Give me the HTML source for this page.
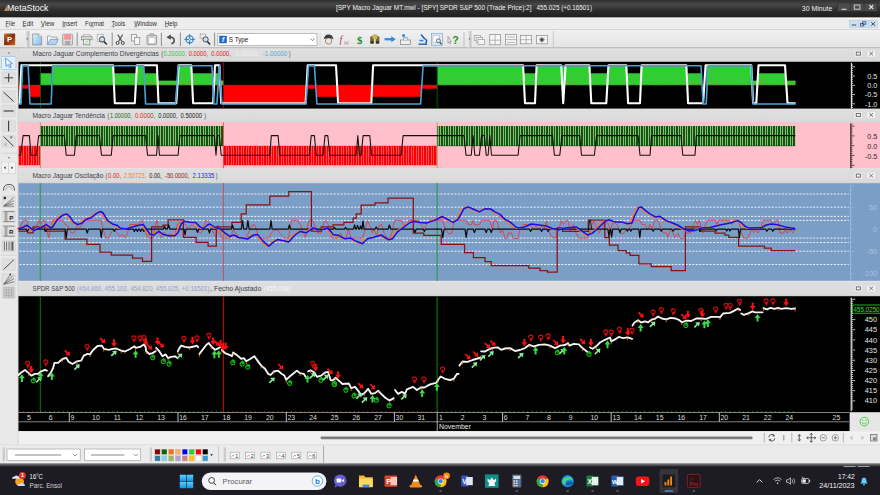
<!DOCTYPE html>
<html lang="pt"><head><meta charset="utf-8"><title>MetaStock</title>
<style>html,body{margin:0;padding:0;background:#ececec;overflow:hidden}svg{display:block}svg{font-family:"Liberation Sans",sans-serif}text{white-space:pre}</style></head>
<body>
<svg width="880" height="495" viewBox="0 0 880 495" font-family='"Liberation Sans", sans-serif'>
<defs>
<linearGradient id="gTitle" x1="0" y1="0" x2="0" y2="1">
<stop offset="0" stop-color="#303030"/><stop offset="0.25" stop-color="#474747"/><stop offset="0.6" stop-color="#2c2c2c"/><stop offset="1" stop-color="#1d1d1d"/></linearGradient>
<linearGradient id="gPanel" x1="0" y1="0" x2="0" y2="1">
<stop offset="0" stop-color="#dfdfdf"/><stop offset="1" stop-color="#dadada"/></linearGradient>
<linearGradient id="gTool" x1="0" y1="0" x2="0" y2="1">
<stop offset="0" stop-color="#f1f1f1"/><stop offset="1" stop-color="#e4e4e4"/></linearGradient>
<linearGradient id="gGrip" x1="0" y1="0" x2="1" y2="0">
<stop offset="0" stop-color="#f0f0f0"/><stop offset="1" stop-color="#b8b8b8"/></linearGradient>
<linearGradient id="gWin" x1="0" y1="0" x2="0" y2="1">
<stop offset="0" stop-color="#5ed0ff"/><stop offset="1" stop-color="#1292e8"/></linearGradient>
<linearGradient id="gP" x1="0" y1="0" x2="1" y2="1">
<stop offset="0" stop-color="#c8742a"/><stop offset="0.5" stop-color="#7a2e12"/><stop offset="1" stop-color="#d8661c"/></linearGradient>
<linearGradient id="gDoc" x1="0" y1="0" x2="1" y2="1">
<stop offset="0" stop-color="#dff0fb"/><stop offset="1" stop-color="#7fbfe6"/></linearGradient>
<linearGradient id="gSep" x1="0" y1="0" x2="0" y2="1">
<stop offset="0" stop-color="#8e8e8e"/><stop offset="0.5" stop-color="#4e4e52"/><stop offset="1" stop-color="#1e1c24"/></linearGradient>
<pattern id="gbars" x="40.4" y="0" width="1.668" height="10" patternUnits="userSpaceOnUse">
<rect x="0" y="0" width="1.668" height="10" fill="#8bb279"/><rect x="0" y="0" width="0.95" height="10" fill="#075b07"/></pattern>
<pattern id="rbars" x="18.5" y="0" width="1.668" height="10" patternUnits="userSpaceOnUse">
<rect x="0" y="0" width="1.668" height="10" fill="#ff7480"/><rect x="0" y="0" width="1.15" height="10" fill="#ff0808"/></pattern>
</defs>
<rect x="0.00" y="0.00" width="880.00" height="495.00" fill="#ececec" />
<rect x="0.00" y="0.00" width="880.00" height="17.80" fill="url(#gTitle)" />
<path d="M4.2 10.9 L7.2 5.2 L7.2 10.9 Z" fill="#f08a1c" stroke="none" stroke-width="1" />
<text x="7.00" y="10.90" font-size="8.6" fill="#ffffff" text-anchor="start" textLength="41.50" lengthAdjust="spacingAndGlyphs" >MetaStock</text>
<text x="336.00" y="10.30" font-size="6.9" fill="#f2f2f2" text-anchor="start" textLength="195.50" lengthAdjust="spacingAndGlyphs" >[SPY Macro Jaguar MT.mwl - [SPY] SPDR S&amp;P 500 (Trade Price):2]</text>
<text x="536.50" y="10.30" font-size="6.9" fill="#f2f2f2" text-anchor="start" textLength="55.50" lengthAdjust="spacingAndGlyphs" >455.025 (+0.16501)</text>
<text x="801.80" y="10.50" font-size="7.2" fill="#f0f0f0" text-anchor="start" textLength="30.60" lengthAdjust="spacingAndGlyphs" >30 Minute</text>
<rect x="837.50" y="2.80" width="40.00" height="8.80" fill="#4b4b4b" rx="1" stroke="#222" stroke-width="0.5"/>
<line x1="850.30" y1="2.80" x2="850.30" y2="11.60" stroke="#2a2a2a" stroke-width="0.6" />
<line x1="864.00" y1="2.80" x2="864.00" y2="11.60" stroke="#2a2a2a" stroke-width="0.6" />
<line x1="841.50" y1="9.30" x2="846.50" y2="9.30" stroke="#d8d8d8" stroke-width="1.1" />
<rect x="854.30" y="5.00" width="5.60" height="4.20" fill="none" stroke="#d8d8d8" stroke-width="0.9"/>
<path d="M869.3 5.0 L873.3 9.0 M873.3 5.0 L869.3 9.0" fill="none" stroke="#e0e0e0" stroke-width="1.1" />
<rect x="0.00" y="17.50" width="880.00" height="12.20" fill="#ededed" />
<line x1="0.00" y1="18.20" x2="880.00" y2="18.20" stroke="#fafafa" stroke-width="0.6" />
<line x1="0.00" y1="29.60" x2="880.00" y2="29.60" stroke="#c6c6c6" stroke-width="0.7" />
<text x="5.50" y="25.60" font-size="6.9" fill="#2e2e2e" text-anchor="start" textLength="9.50" lengthAdjust="spacingAndGlyphs" >File</text>
<line x1="5.50" y1="26.70" x2="8.70" y2="26.70" stroke="#2e2e2e" stroke-width="0.5" />
<text x="22.60" y="25.60" font-size="6.9" fill="#2e2e2e" text-anchor="start" textLength="10.60" lengthAdjust="spacingAndGlyphs" >Edit</text>
<line x1="22.60" y1="26.70" x2="25.80" y2="26.70" stroke="#2e2e2e" stroke-width="0.5" />
<text x="40.80" y="25.60" font-size="6.9" fill="#2e2e2e" text-anchor="start" textLength="13.60" lengthAdjust="spacingAndGlyphs" >View</text>
<line x1="40.80" y1="26.70" x2="44.00" y2="26.70" stroke="#2e2e2e" stroke-width="0.5" />
<text x="62.20" y="25.60" font-size="6.9" fill="#2e2e2e" text-anchor="start" textLength="15.00" lengthAdjust="spacingAndGlyphs" >Insert</text>
<line x1="62.20" y1="26.70" x2="65.40" y2="26.70" stroke="#2e2e2e" stroke-width="0.5" />
<text x="85.00" y="25.60" font-size="6.9" fill="#2e2e2e" text-anchor="start" textLength="19.00" lengthAdjust="spacingAndGlyphs" >Format</text>
<line x1="90.60" y1="26.70" x2="93.80" y2="26.70" stroke="#2e2e2e" stroke-width="0.5" />
<text x="111.50" y="25.60" font-size="6.9" fill="#2e2e2e" text-anchor="start" textLength="13.70" lengthAdjust="spacingAndGlyphs" >Tools</text>
<line x1="111.50" y1="26.70" x2="114.70" y2="26.70" stroke="#2e2e2e" stroke-width="0.5" />
<text x="134.20" y="25.60" font-size="6.9" fill="#2e2e2e" text-anchor="start" textLength="22.80" lengthAdjust="spacingAndGlyphs" >Window</text>
<line x1="134.20" y1="26.70" x2="137.40" y2="26.70" stroke="#2e2e2e" stroke-width="0.5" />
<text x="164.70" y="25.60" font-size="6.9" fill="#2e2e2e" text-anchor="start" textLength="12.80" lengthAdjust="spacingAndGlyphs" >Help</text>
<line x1="164.70" y1="26.70" x2="167.90" y2="26.70" stroke="#2e2e2e" stroke-width="0.5" />
<rect x="849.30" y="20.30" width="28.40" height="7.00" fill="#cfe1f0" stroke="#a9c3da" stroke-width="0.5"/>
<line x1="858.60" y1="20.30" x2="858.60" y2="27.30" stroke="#a9c3da" stroke-width="0.5" />
<line x1="868.30" y1="20.30" x2="868.30" y2="27.30" stroke="#a9c3da" stroke-width="0.5" />
<line x1="851.60" y1="25.00" x2="856.20" y2="25.00" stroke="#31506f" stroke-width="1.0" />
<rect x="860.60" y="23.60" width="3.20" height="2.40" fill="none" stroke="#31506f" stroke-width="0.8"/>
<rect x="862.60" y="21.80" width="3.20" height="2.40" fill="none" stroke="#31506f" stroke-width="0.8"/>
<path d="M871.2 22.1 L875.0 25.7 M875.0 22.1 L871.2 25.7" fill="none" stroke="#31506f" stroke-width="1.0" />
<rect x="0.00" y="29.90" width="880.00" height="18.00" fill="url(#gTool)" />
<line x1="0.00" y1="48.10" x2="880.00" y2="48.10" stroke="#9c9c9c" stroke-width="1.2" />
<rect x="4.00" y="33.60" width="11.20" height="11.60" fill="url(#gP)" rx="0.8"/>
<text x="9.60" y="42.20" font-size="7.6" fill="#fff" text-anchor="middle" font-weight="bold">P</text>
<rect x="25.00" y="31.00" width="4.40" height="16.40" fill="url(#gGrip)" />
<path d="M26.3 38.6 h1.8 l-0.9 1.2 z" fill="#333" stroke="none" stroke-width="1" />
<path d="M32.6 34.0 h6.2 l2.8 2.8 v8.2 h-9 z" fill="url(#gDoc)" stroke="#7d8790" stroke-width="0.7" />
<path d="M38.8 34.0 v2.8 h2.8" fill="#fff" stroke="#7d8790" stroke-width="0.6" />
<path d="M47.5 44.6 v-8.6 h3.2 l1 1.2 h5.2 v2.2" fill="#f3f6f9" stroke="#7f8d9a" stroke-width="0.7" />
<path d="M47.5 44.6 l2.6 -5.2 h8.2 l-2.6 5.2 z" fill="#b5d3ee" stroke="#6f8fb0" stroke-width="0.7" />
<rect x="62.60" y="34.20" width="10.00" height="10.80" fill="#d9d9d9" rx="1" stroke="#8d8d8d" stroke-width="0.7"/>
<rect x="64.20" y="34.60" width="6.80" height="5.00" fill="#ff8c96" />
<rect x="65.00" y="41.00" width="5.20" height="3.80" fill="#a8a8a8" />
<line x1="77.20" y1="32.60" x2="77.20" y2="46.00" stroke="#858585" stroke-width="0.9" />
<path d="M83.2 36.8 v-2 h7 v2" fill="#fff" stroke="#808080" stroke-width="0.6" />
<rect x="81.40" y="36.80" width="10.60" height="3.00" fill="#e4e4e4" stroke="#7c7c7c" stroke-width="0.7"/>
<rect x="83.60" y="39.20" width="6.20" height="5.60" fill="#e7f0e4" stroke="#7c7c7c" stroke-width="0.7"/>
<path d="M85 43.6 l3.4 -3.2" fill="none" stroke="#8fc58a" stroke-width="0.8" />
<rect x="97.20" y="34.20" width="6.00" height="7.20" fill="#f4f4f4" stroke="#9a9a9a" stroke-width="0.6"/>
<circle cx="102.0" cy="39.4" r="2.7" fill="#bfe0f4" stroke="#3a3a3a" stroke-width="0.9"/>
<line x1="103.90" y1="41.40" x2="106.80" y2="44.60" stroke="#2a2a2a" stroke-width="1.5" />
<line x1="112.20" y1="32.60" x2="112.20" y2="46.00" stroke="#858585" stroke-width="0.9" />
<path d="M117.8 34.6 l4.0 6.8 M122.6 34.6 l-4.0 6.8" fill="none" stroke="#5a5a5a" stroke-width="1.2" />
<circle cx="117.6" cy="43.0" r="1.5" fill="none" stroke="#3a3a3a" stroke-width="0.9"/>
<circle cx="122.8" cy="43.0" r="1.5" fill="none" stroke="#3a3a3a" stroke-width="0.9"/>
<rect x="131.60" y="34.40" width="5.00" height="6.60" fill="#f6f6f6" stroke="#777" stroke-width="0.6"/>
<rect x="134.40" y="37.60" width="5.40" height="6.80" fill="#f6f6f6" stroke="#777" stroke-width="0.6"/>
<rect x="147.00" y="35.20" width="9.60" height="9.40" fill="#dedede" rx="0.8" stroke="#7b7b7b" stroke-width="0.7"/>
<rect x="148.80" y="37.20" width="6.20" height="6.60" fill="#fbfbfb" stroke="#9a9a9a" stroke-width="0.4"/>
<rect x="150.00" y="33.80" width="3.60" height="2.20" fill="#c8c8c8" stroke="#7b7b7b" stroke-width="0.5"/>
<line x1="161.40" y1="32.60" x2="161.40" y2="46.00" stroke="#858585" stroke-width="0.9" />
<path d="M171.4 43.8 q3.6 -1.2 2.6 -4.6 q-1 -2.4 -4.6 -2.2" fill="none" stroke="#4d4d4d" stroke-width="1.6" />
<path d="M166.4 37.2 l4.4 -2.8 v5.4 z" fill="#4d4d4d" stroke="none" stroke-width="1" />
<line x1="180.40" y1="32.60" x2="180.40" y2="46.00" stroke="#858585" stroke-width="0.9" />
<circle cx="189.6" cy="39.4" r="3.6" fill="none" stroke="#1b74c4" stroke-width="1.1"/>
<path d="M184.4 39.4 h10.4 M189.6 34.2 v10.4" fill="none" stroke="#1b74c4" stroke-width="0.9" />
<circle cx="189.6" cy="39.4" r="1.0" fill="#fff" stroke="#1b74c4" stroke-width="0.5"/>
<rect x="200.20" y="34.00" width="5.40" height="4.40" fill="none" stroke="#555" stroke-width="0.6" stroke-dasharray="1 0.7"/>
<circle cx="205.6" cy="39.4" r="2.6" fill="#c5e3f5" stroke="#3a3a3a" stroke-width="0.9"/>
<line x1="207.40" y1="41.40" x2="210.00" y2="44.40" stroke="#2a2a2a" stroke-width="1.5" />
<line x1="214.60" y1="32.60" x2="214.60" y2="46.00" stroke="#858585" stroke-width="0.9" />
<rect x="217.80" y="33.40" width="99.20" height="12.20" fill="#ffffff" stroke="#a4a4a4" stroke-width="0.7"/>
<rect x="219.60" y="36.00" width="7.00" height="7.00" fill="#1e6fd0" stroke="#0d4a98" stroke-width="0.4"/>
<text x="223.10" y="41.90" font-size="6.4" fill="#fff" text-anchor="middle" font-style="italic" font-weight="bold">f</text>
<text x="228.80" y="42.00" font-size="7.0" fill="#222" text-anchor="start" textLength="19.60" lengthAdjust="spacingAndGlyphs" >S Type</text>
<path d="M310.2 38.4 l2.2 2.2 l2.2 -2.2" fill="none" stroke="#555" stroke-width="0.7" />
<line x1="320.20" y1="32.60" x2="320.20" y2="46.00" stroke="#cfcfcf" stroke-width="0.6" />
<circle cx="328.6" cy="41.0" r="3.2" fill="#f5e3cf" stroke="#555" stroke-width="0.6"/>
<path d="M323.8 39.2 q4.8 -2.2 9.6 0 q-0.6 -4.8 -4.8 -4.8 q-4.2 0 -4.8 4.8 z" fill="#3c3c3c" stroke="none" stroke-width="1" />
<text x="339.60" y="43.20" font-size="10.2" fill="#c2347a" text-anchor="start" font-style="italic" style="font-family:&quot;Liberation Serif&quot;,serif">f</text>
<text x="344.20" y="43.60" font-size="3.6" fill="#c2347a" text-anchor="start" >(x)</text>
<text x="359.60" y="43.80" font-size="10.8" fill="#128a2e" text-anchor="middle" font-weight="bold" style="font-family:&quot;Liberation Serif&quot;,serif">$</text>
<rect x="370.20" y="36.20" width="3.80" height="7.60" fill="#7b6a2a" rx="1"/>
<rect x="375.60" y="36.20" width="3.80" height="7.60" fill="#7b6a2a" rx="1"/>
<rect x="372.60" y="34.40" width="4.60" height="4.60" fill="#c9b458" />
<rect x="370.60" y="41.20" width="3.00" height="2.20" fill="#2d2d2d" />
<rect x="376.00" y="41.20" width="3.00" height="2.20" fill="#2d2d2d" />
<path d="M384.6 38.0 h6.6 v-1.8 l4.6 3.0 l-4.6 3.0 v-1.8 h-6.6 z" fill="#2b8ae6" stroke="none" stroke-width="1" />
<path d="M384.6 38.0 h6.6 M384.6 40.4 h6.6" fill="none" stroke="#e6f3ff" stroke-width="0.5" stroke-dasharray="0.8 0.8"/>
<rect x="400.60" y="40.00" width="9.80" height="4.40" fill="#efefef" stroke="#808080" stroke-width="0.7"/>
<path d="M403.6 40.0 v-2.4 h4 v2.4" fill="#dbe8f4" stroke="#6d8cab" stroke-width="0.6" />
<circle cx="403.6" cy="35.6" r="1.5" fill="#2b8ae6"/>
<path d="M418.6 44.2 h8.6" fill="none" stroke="#1d5fb4" stroke-width="1.4" />
<path d="M421.0 34.6 l3.6 4.2 M424.6 38.6 q3.4 1.6 1.0 5.0" fill="none" stroke="#1d5fb4" stroke-width="1.5" />
<rect x="419.40" y="39.80" width="4.00" height="1.60" fill="#2b8ae6" />
<rect x="431.40" y="33.60" width="11.00" height="11.60" fill="#dbe9f6" stroke="#6f9ccc" stroke-width="0.6"/>
<rect x="433.00" y="35.20" width="6.20" height="7.00" fill="#fbfbfb" stroke="#9a9a9a" stroke-width="0.4"/>
<circle cx="438.4" cy="40.8" r="2.0" fill="#d4ecfb" stroke="#444" stroke-width="0.7"/>
<line x1="439.80" y1="42.40" x2="441.60" y2="44.40" stroke="#333" stroke-width="1.1" />
<path d="M448.0 36.4 l3.2 5.0 l-1.4 0.2 l0.8 1.8 l-0.9 0.3 l-0.8 -1.8 l-0.9 0.9 z" fill="#f2f2f2" stroke="#666" stroke-width="0.5" />
<text x="455.40" y="43.80" font-size="10.6" fill="#2f8f20" text-anchor="middle" font-weight="bold">?</text>
<line x1="464.00" y1="32.00" x2="464.00" y2="46.60" stroke="#a5a5a5" stroke-width="0.6" />
<rect x="467.60" y="31.00" width="3.80" height="16.40" fill="url(#gGrip)" />
<path d="M468.6 38.6 h1.6 l-0.8 1.1 z" fill="#333" stroke="none" stroke-width="1" />
<rect x="474.20" y="35.40" width="6.20" height="5.00" fill="#f6f6f6" stroke="#8c8c8c" stroke-width="0.6"/>
<rect x="476.20" y="37.40" width="6.20" height="5.00" fill="#f6f6f6" stroke="#8c8c8c" stroke-width="0.6"/>
<rect x="478.00" y="39.40" width="6.40" height="5.20" fill="#f6f6f6" stroke="#8c8c8c" stroke-width="0.6"/>
<rect x="489.80" y="34.40" width="10.60" height="10.40" fill="#f6f6f6" stroke="#8c8c8c" stroke-width="0.7"/>
<path d="M495.1 34.4 v10.4 M489.8 40.2 h10.6" fill="none" stroke="#8c8c8c" stroke-width="0.6" />
<rect x="505.60" y="34.40" width="10.80" height="10.40" fill="#f6f6f6" stroke="#8c8c8c" stroke-width="0.7"/>
<path d="M505.6 39.6 h10.8 M507 37 h8 M507 42.4 h8" fill="none" stroke="#8c8c8c" stroke-width="0.6" />
<rect x="520.60" y="35.60" width="11.00" height="8.20" fill="#f6f6f6" stroke="#8c8c8c" stroke-width="0.7"/>
<path d="M526.1 35.6 v8.2 M520.6 39.7 h11" fill="none" stroke="#8c8c8c" stroke-width="0.6" />
<rect x="536.40" y="35.60" width="11.00" height="8.20" fill="#f6f6f6" stroke="#8c8c8c" stroke-width="0.7"/>
<circle cx="541.9" cy="39.7" r="1.7" fill="#333"/>
<path d="M538.6 39.7 h6.6 M541.9 36.6 v6.2 M539.6 37.4 l4.6 4.6 M544.2 37.4 l-4.6 4.6" fill="none" stroke="#555" stroke-width="0.5" />
<line x1="553.40" y1="31.00" x2="553.40" y2="47.20" stroke="#b3b3b3" stroke-width="0.6" />
<rect x="0.00" y="48.50" width="18.00" height="396.00" fill="#e9e9e9" />
<line x1="18.20" y1="48.50" x2="18.20" y2="444.50" stroke="#b5b5b5" stroke-width="0.6" />
<rect x="0.00" y="48.60" width="18.00" height="9.00" fill="#dcdcdc" />
<circle cx="9" cy="52.9" r="0.7" fill="#444"/>
<circle cx="9" cy="157.7" r="0.7" fill="#444"/>
<rect x="1.00" y="152.80" width="16.00" height="0.60" fill="#c4c4c4" />
<rect x="1.00" y="87.00" width="16.00" height="0.60" fill="#c8c8c8" />
<rect x="1.40" y="56.40" width="14.60" height="13.20" fill="#e3f0fb" stroke="#8fc1ea" stroke-width="0.7" rx="0.8"/>
<path d="M5.6 58.2 l0.4 8.2 l2.2 -1.8 l1.6 3.2 l1.4 -0.7 l-1.6 -3.1 l2.8 -0.4 z" fill="#fff" stroke="#2f7fd6" stroke-width="0.8" />
<rect x="2.00" y="72.00" width="13.40" height="11.60" fill="#e0e0e0" stroke="#cfcfcf" stroke-width="0.5" rx="0.6"/>
<path d="M4.4 77.8 h8.6 M8.7 73.4 v8.8" fill="none" stroke="#3a3a3a" stroke-width="1.0" />
<rect x="2.00" y="90.80" width="13.40" height="11.60" fill="#e0e0e0" stroke="#cfcfcf" stroke-width="0.5" rx="0.6"/>
<path d="M3.6 92.2 l10 9.2" fill="none" stroke="#3a3a3a" stroke-width="1.0" />
<rect x="2.00" y="105.20" width="13.40" height="11.60" fill="#e0e0e0" stroke="#cfcfcf" stroke-width="0.5" rx="0.6"/>
<path d="M3.6 111.0 h10" fill="none" stroke="#3a3a3a" stroke-width="1.1" />
<rect x="2.00" y="120.20" width="13.40" height="11.60" fill="#e0e0e0" stroke="#cfcfcf" stroke-width="0.5" rx="0.6"/>
<path d="M8.6 120.8 v10.4" fill="none" stroke="#3a3a3a" stroke-width="1.1" />
<rect x="2.00" y="135.60" width="13.40" height="11.60" fill="#e0e0e0" stroke="#cfcfcf" stroke-width="0.5" rx="0.6"/>
<path d="M3.8 136.6 l9.6 9.6" fill="none" stroke="#3a3a3a" stroke-width="1.0" />
<path d="M9.6 137.2 h3.2 M11.2 135.8 v3.0 M4.2 143.6 l2.2 2.2 M5.4 142.4 l1.2 1.2" fill="none" stroke="#555" stroke-width="0.6" />
<rect x="1.40" y="162.00" width="6.80" height="11.60" fill="#f3f3f3" stroke="#c9c9c9" stroke-width="0.5"/>
<rect x="8.80" y="162.00" width="6.80" height="11.60" fill="#f3f3f3" stroke="#c9c9c9" stroke-width="0.5"/>
<path d="M5.6 166.2 v3.0 l-1.8 -1.5 z M11.4 166.2 v3.0 l1.8 -1.5 z" fill="#333" stroke="none" stroke-width="1" />
<path d="M3.4 190.6 q0 -6.2 5.6 -6.2 q5.6 0 5.6 6.2" fill="none" stroke="#4a4a4a" stroke-width="0.9" />
<path d="M5.6 190.6 q0 -4.0 3.4 -4.0 q3.4 0 3.4 4.0" fill="none" stroke="#8a8a8a" stroke-width="0.6" />
<rect x="2.00" y="195.80" width="13.40" height="11.60" fill="#e0e0e0" stroke="#cfcfcf" stroke-width="0.5" rx="0.6"/>
<path d="M3.8 206.0 l10 -8.6 M3.8 206.0 l10 -5.4 M3.8 206.0 l10 -2.4 M3.8 206.0 l10 0.2" fill="none" stroke="#444" stroke-width="0.6" />
<rect x="3.60" y="196.80" width="2.40" height="2.40" fill="#333" />
<rect x="2.00" y="210.80" width="13.40" height="11.60" fill="#e0e0e0" stroke="#cfcfcf" stroke-width="0.5" rx="0.6"/>
<path d="M3.4 211.6 h11 M3.4 221.6 h11 M5.2 212 v9.4 M6.8 212 v9.4" fill="none" stroke="#555" stroke-width="0.6" />
<text x="11.20" y="219.60" font-size="6.2" fill="#222" text-anchor="middle" font-weight="bold">P</text>
<rect x="2.00" y="225.40" width="13.40" height="11.60" fill="#e0e0e0" stroke="#cfcfcf" stroke-width="0.5" rx="0.6"/>
<path d="M3.4 226.2 h11 M3.4 236.2 h11 M5.2 226.6 v9.4 M6.8 226.6 v9.4" fill="none" stroke="#555" stroke-width="0.6" />
<text x="11.20" y="234.20" font-size="6.2" fill="#222" text-anchor="middle" font-weight="bold">R</text>
<rect x="2.00" y="240.20" width="13.40" height="11.60" fill="#e0e0e0" stroke="#cfcfcf" stroke-width="0.5" rx="0.6"/>
<path d="M4.4 241.6 v9 M6.6 241.6 v9 M9.0 241.6 v9 M11.2 241.6 v9" fill="none" stroke="#555" stroke-width="0.8" />
<path d="M12.8 241.6 v9" fill="none" stroke="#222" stroke-width="1.0" />
<rect x="1.00" y="254.80" width="16.00" height="0.50" fill="#c4c4c4" />
<rect x="2.00" y="258.80" width="13.40" height="11.60" fill="#e0e0e0" stroke="#cfcfcf" stroke-width="0.5" rx="0.6"/>
<path d="M3.6 269.4 l10.2 -9.6" fill="none" stroke="#3a3a3a" stroke-width="0.9" />
<rect x="2.00" y="273.80" width="13.40" height="11.60" fill="#e0e0e0" stroke="#cfcfcf" stroke-width="0.5" rx="0.6"/>
<path d="M3.8 284.2 l9.6 -8.8 M3.8 284.2 l10.2 -5.6 M3.8 284.2 l10.4 -2.4 M3.8 284.2 l6.6 -9.6" fill="none" stroke="#444" stroke-width="0.6" />
<path d="M9.0 274.0 l2.2 -0.4 l-0.6 2.2 z" fill="#333" stroke="none" stroke-width="1" />
<rect x="2.00" y="286.80" width="13.40" height="11.60" fill="#e0e0e0" stroke="#cfcfcf" stroke-width="0.5" rx="0.6"/>
<rect x="3.60" y="287.40" width="10.40" height="10.20" fill="#d0d0d0" stroke="#777" stroke-width="0.4" stroke-dasharray="0.8 0.8"/>
<path d="M3.6 290 h10.4 M3.6 292.6 h10.4 M3.6 295.2 h10.4 M6.2 287.4 v10.2 M8.8 287.4 v10.2 M11.4 287.4 v10.2" fill="none" stroke="#8a8a8a" stroke-width="0.4" />
<rect x="18.50" y="48.50" width="861.50" height="13.30" fill="url(#gPanel)" />
<line x1="18.50" y1="48.80" x2="880.00" y2="48.80" stroke="#ebebeb" stroke-width="0.6" />
<line x1="18.50" y1="61.60" x2="880.00" y2="61.60" stroke="#bdbdbd" stroke-width="0.5" />
<text x="32.60" y="56.20" font-size="7.3" fill="#3b3f4c" text-anchor="start" textLength="126.40" lengthAdjust="spacingAndGlyphs" >Macro Jaguar Complemento Divergências</text>
<text x="161.30" y="56.20" font-size="7.3" fill="#3b3f4c" text-anchor="start" textLength="1.90" lengthAdjust="spacingAndGlyphs" >(</text>
<text x="163.40" y="56.20" font-size="7.3" fill="#3ec43e" text-anchor="start" textLength="23.00" lengthAdjust="spacingAndGlyphs" >0.20000,</text>
<text x="188.70" y="56.20" font-size="7.3" fill="#f01818" text-anchor="start" textLength="19.50" lengthAdjust="spacingAndGlyphs" >0.0000,</text>
<text x="211.30" y="56.20" font-size="7.3" fill="#f01818" text-anchor="start" textLength="19.60" lengthAdjust="spacingAndGlyphs" >0.0000,</text>
<text x="233.60" y="56.20" font-size="7.3" fill="#f2f2f2" text-anchor="start" textLength="26.00" lengthAdjust="spacingAndGlyphs" >-1.00000,</text>
<text x="262.70" y="56.20" font-size="7.3" fill="#5aa6d6" text-anchor="start" textLength="24.60" lengthAdjust="spacingAndGlyphs" >-1.00000</text>
<text x="288.80" y="56.20" font-size="7.3" fill="#3b3f4c" text-anchor="start" textLength="1.80" lengthAdjust="spacingAndGlyphs" >)</text>
<rect x="853.80" y="50.30" width="8.80" height="6.80" fill="#f1f1f1" stroke="#cfcfcf" stroke-width="0.5" rx="0.6"/>
<rect x="866.80" y="50.30" width="8.80" height="6.80" fill="#f1f1f1" stroke="#cfcfcf" stroke-width="0.5" rx="0.6"/>
<rect x="856.20" y="52.10" width="4.20" height="3.00" fill="none" stroke="#555" stroke-width="0.8"/>
<path d="M869.4 51.80 l3.6 3.6 M873.0 51.80 l-3.6 3.6" fill="none" stroke="#555" stroke-width="0.8" />
<rect x="18.50" y="108.60" width="861.50" height="14.00" fill="url(#gPanel)" />
<line x1="18.50" y1="108.90" x2="880.00" y2="108.90" stroke="#ebebeb" stroke-width="0.6" />
<line x1="18.50" y1="122.40" x2="880.00" y2="122.40" stroke="#bdbdbd" stroke-width="0.5" />
<text x="32.60" y="117.50" font-size="7.3" fill="#3b3f4c" text-anchor="start" textLength="72.40" lengthAdjust="spacingAndGlyphs" >Macro Jaguar Tendência</text>
<text x="107.60" y="117.50" font-size="7.3" fill="#3b3f4c" text-anchor="start" textLength="1.80" lengthAdjust="spacingAndGlyphs" >(</text>
<text x="110.00" y="117.50" font-size="7.3" fill="#1e6a1e" text-anchor="start" textLength="22.00" lengthAdjust="spacingAndGlyphs" >1.00000,</text>
<text x="135.00" y="117.50" font-size="7.3" fill="#f01818" text-anchor="start" textLength="20.50" lengthAdjust="spacingAndGlyphs" >0.0000,</text>
<text x="158.30" y="117.50" font-size="7.3" fill="#1c1c1c" text-anchor="start" textLength="19.20" lengthAdjust="spacingAndGlyphs" >0.0000,</text>
<text x="180.50" y="117.50" font-size="7.3" fill="#1c1c1c" text-anchor="start" textLength="21.50" lengthAdjust="spacingAndGlyphs" >0.50000</text>
<text x="204.20" y="117.50" font-size="7.3" fill="#3b3f4c" text-anchor="start" textLength="1.80" lengthAdjust="spacingAndGlyphs" >)</text>
<rect x="853.80" y="111.60" width="8.80" height="6.80" fill="#f1f1f1" stroke="#cfcfcf" stroke-width="0.5" rx="0.6"/>
<rect x="866.80" y="111.60" width="8.80" height="6.80" fill="#f1f1f1" stroke="#cfcfcf" stroke-width="0.5" rx="0.6"/>
<rect x="856.20" y="113.40" width="4.20" height="3.00" fill="none" stroke="#555" stroke-width="0.8"/>
<path d="M869.4 113.10 l3.6 3.6 M873.0 113.10 l-3.6 3.6" fill="none" stroke="#555" stroke-width="0.8" />
<rect x="18.50" y="168.20" width="861.50" height="15.00" fill="url(#gPanel)" />
<line x1="18.50" y1="168.50" x2="880.00" y2="168.50" stroke="#ebebeb" stroke-width="0.6" />
<line x1="18.50" y1="183.00" x2="880.00" y2="183.00" stroke="#bdbdbd" stroke-width="0.5" />
<text x="32.60" y="178.20" font-size="7.3" fill="#3b3f4c" text-anchor="start" textLength="70.80" lengthAdjust="spacingAndGlyphs" >Macro Jaguar Oscilação</text>
<text x="105.60" y="178.20" font-size="7.3" fill="#3b3f4c" text-anchor="start" textLength="1.80" lengthAdjust="spacingAndGlyphs" >(</text>
<text x="108.00" y="178.20" font-size="7.3" fill="#f01818" text-anchor="start" textLength="13.30" lengthAdjust="spacingAndGlyphs" >0.00,</text>
<text x="123.80" y="178.20" font-size="7.3" fill="#f08030" text-anchor="start" textLength="22.50" lengthAdjust="spacingAndGlyphs" >2.50723,</text>
<text x="149.30" y="178.20" font-size="7.3" fill="#1c1c1c" text-anchor="start" textLength="12.50" lengthAdjust="spacingAndGlyphs" >0.00,</text>
<text x="165.00" y="178.20" font-size="7.3" fill="#8b1a1a" text-anchor="start" textLength="24.30" lengthAdjust="spacingAndGlyphs" >-50.0000,</text>
<text x="192.50" y="178.20" font-size="7.3" fill="#1c28e8" text-anchor="start" textLength="22.00" lengthAdjust="spacingAndGlyphs" >2.13335</text>
<text x="215.80" y="178.20" font-size="7.3" fill="#3b3f4c" text-anchor="start" textLength="1.80" lengthAdjust="spacingAndGlyphs" >)</text>
<rect x="853.80" y="172.30" width="8.80" height="6.80" fill="#f1f1f1" stroke="#cfcfcf" stroke-width="0.5" rx="0.6"/>
<rect x="866.80" y="172.30" width="8.80" height="6.80" fill="#f1f1f1" stroke="#cfcfcf" stroke-width="0.5" rx="0.6"/>
<rect x="856.20" y="174.10" width="4.20" height="3.00" fill="none" stroke="#555" stroke-width="0.8"/>
<path d="M869.4 173.80 l3.6 3.6 M873.0 173.80 l-3.6 3.6" fill="none" stroke="#555" stroke-width="0.8" />
<rect x="18.50" y="280.80" width="861.50" height="15.40" fill="url(#gPanel)" />
<line x1="18.50" y1="281.10" x2="880.00" y2="281.10" stroke="#ebebeb" stroke-width="0.6" />
<line x1="18.50" y1="296.00" x2="880.00" y2="296.00" stroke="#bdbdbd" stroke-width="0.5" />
<text x="32.60" y="291.00" font-size="7.3" fill="#3b3f4c" text-anchor="start" textLength="42.40" lengthAdjust="spacingAndGlyphs" >SPDR S&amp;P 500</text>
<text x="77.00" y="291.00" font-size="7.3" fill="#8fa6c8" text-anchor="start" textLength="132.60" lengthAdjust="spacingAndGlyphs" >(454.860, 455.100, 454.820, 455.025, +0.16501)</text>
<text x="210.20" y="291.00" font-size="7.3" fill="#3b3f4c" text-anchor="start" textLength="51.00" lengthAdjust="spacingAndGlyphs" >, Fecho Ajustado</text>
<text x="263.80" y="291.00" font-size="7.3" fill="#f7f7f7" text-anchor="start" textLength="26.80" lengthAdjust="spacingAndGlyphs" >(455.008)</text>
<rect x="853.80" y="285.10" width="8.80" height="6.80" fill="#f1f1f1" stroke="#cfcfcf" stroke-width="0.5" rx="0.6"/>
<rect x="866.80" y="285.10" width="8.80" height="6.80" fill="#f1f1f1" stroke="#cfcfcf" stroke-width="0.5" rx="0.6"/>
<rect x="856.20" y="286.90" width="4.20" height="3.00" fill="none" stroke="#555" stroke-width="0.8"/>
<path d="M869.4 286.60 l3.6 3.6 M873.0 286.60 l-3.6 3.6" fill="none" stroke="#555" stroke-width="0.8" />
<rect x="18.50" y="61.80" width="861.50" height="46.80" fill="#000" />
<rect x="18.50" y="85.10" width="1.10" height="3.60" fill="#ff0000" />
<rect x="22.75" y="85.10" width="5.35" height="3.60" fill="#ff0000" />
<rect x="30.00" y="85.10" width="10.40" height="11.70" fill="#ff0000" />
<rect x="40.40" y="73.30" width="11.20" height="11.80" fill="#32cd32" />
<rect x="52.40" y="66.40" width="60.60" height="18.70" fill="#32cd32" />
<rect x="113.00" y="73.30" width="23.90" height="11.80" fill="#32cd32" />
<rect x="136.90" y="66.40" width="7.10" height="18.70" fill="#32cd32" />
<rect x="144.00" y="73.30" width="13.50" height="11.80" fill="#32cd32" />
<rect x="157.50" y="80.60" width="19.70" height="4.50" fill="#32cd32" />
<rect x="178.00" y="66.40" width="13.30" height="18.70" fill="#32cd32" />
<rect x="191.30" y="73.30" width="21.30" height="11.80" fill="#32cd32" />
<rect x="215.00" y="73.30" width="4.60" height="11.80" fill="#32cd32" />
<rect x="220.20" y="80.60" width="3.50" height="4.50" fill="#32cd32" />
<rect x="223.70" y="85.10" width="82.10" height="17.90" fill="#ff0000" />
<rect x="308.00" y="85.10" width="6.80" height="3.60" fill="#ff0000" />
<rect x="316.60" y="85.10" width="20.40" height="11.70" fill="#ff0000" />
<rect x="337.00" y="85.10" width="35.00" height="17.90" fill="#ff0000" />
<rect x="372.00" y="85.10" width="49.00" height="11.70" fill="#ff0000" />
<rect x="422.40" y="85.10" width="15.00" height="3.60" fill="#ff0000" />
<rect x="437.40" y="66.40" width="86.60" height="18.70" fill="#32cd32" />
<rect x="524.00" y="73.30" width="12.00" height="11.80" fill="#32cd32" />
<rect x="536.00" y="66.40" width="54.20" height="18.70" fill="#32cd32" />
<rect x="590.20" y="73.30" width="17.30" height="11.80" fill="#32cd32" />
<rect x="607.50" y="66.40" width="19.70" height="18.70" fill="#32cd32" />
<rect x="627.20" y="73.30" width="13.40" height="11.80" fill="#32cd32" />
<rect x="640.60" y="66.40" width="46.60" height="18.70" fill="#32cd32" />
<rect x="687.20" y="73.30" width="14.40" height="11.80" fill="#32cd32" />
<rect x="706.20" y="66.40" width="45.40" height="18.70" fill="#32cd32" />
<rect x="752.80" y="80.60" width="5.40" height="4.50" fill="#32cd32" />
<rect x="758.20" y="73.30" width="27.40" height="11.80" fill="#32cd32" />
<rect x="786.40" y="80.60" width="9.20" height="4.50" fill="#32cd32" />
<line x1="18.50" y1="85.20" x2="795.30" y2="85.20" stroke="#d81010" stroke-width="0.9" stroke-dasharray="1.1 0.6"/>
<line x1="40.40" y1="61.80" x2="40.40" y2="108.60" stroke="#067006" stroke-width="0.8" />
<line x1="223.40" y1="61.80" x2="223.40" y2="108.60" stroke="#e00000" stroke-width="0.7" />
<line x1="437.20" y1="61.80" x2="437.20" y2="108.60" stroke="#067006" stroke-width="0.8" />
<polyline points="18.60,103.30 19.60,103.30 21.40,65.20 113.10,65.20 114.80,103.30 134.80,103.30 136.90,65.20 156.90,65.20 158.50,103.30 176.30,103.30 178.70,65.20 191.30,65.20 193.10,103.30 213.10,103.30 215.00,65.20 219.40,65.20 221.20,103.30 305.60,103.30 307.70,65.20 336.00,65.20 338.10,103.30 371.30,103.30 373.10,65.20 523.10,65.20 525.00,103.30 535.00,103.30 536.60,65.20 561.20,65.20 563.20,103.30 563.20,103.30 565.60,65.20 589.40,65.20 591.30,103.30 606.30,103.30 608.50,65.20 626.30,65.20 628.10,103.30 640.00,103.30 641.60,65.20 686.30,65.20 688.10,103.30 703.10,103.30 705.60,65.20 751.30,65.20 753.10,103.30 756.30,103.30 758.50,65.20 785.00,65.20 787.50,103.30 795.60,103.30" fill="none" stroke="#ffffff" stroke-width="2.1" stroke-linejoin="round"/>
<polyline points="18.60,104.00 21.00,104.00 22.60,65.80 28.10,65.80 30.00,104.00 51.20,104.00 52.60,65.80 143.80,65.80 145.60,104.00 175.60,104.00 178.10,65.80 211.90,65.80 213.80,104.00 216.90,104.00 219.40,65.80 219.40,65.80 221.90,104.00 306.00,104.00 308.50,65.80 314.40,65.80 316.90,104.00 420.60,104.00 423.10,65.80 701.00,65.80 703.10,104.00 706.20,104.00 708.10,65.80 751.30,65.80 753.10,104.00 795.60,104.00" fill="none" stroke="#4aa2d8" stroke-width="1.6" stroke-linejoin="round"/>
<line x1="851.40" y1="62.80" x2="851.40" y2="108.60" stroke="#e8e8e8" stroke-width="1.1" />
<line x1="851.40" y1="85.30" x2="855.00" y2="85.30" stroke="#e8e8e8" stroke-width="0.8" />
<line x1="851.40" y1="83.45" x2="853.00" y2="83.45" stroke="#e8e8e8" stroke-width="0.8" />
<line x1="851.40" y1="81.60" x2="853.00" y2="81.60" stroke="#e8e8e8" stroke-width="0.8" />
<line x1="851.40" y1="79.75" x2="853.00" y2="79.75" stroke="#e8e8e8" stroke-width="0.8" />
<line x1="851.40" y1="77.90" x2="853.00" y2="77.90" stroke="#e8e8e8" stroke-width="0.8" />
<line x1="851.40" y1="76.05" x2="855.00" y2="76.05" stroke="#e8e8e8" stroke-width="0.8" />
<line x1="851.40" y1="74.20" x2="853.00" y2="74.20" stroke="#e8e8e8" stroke-width="0.8" />
<line x1="851.40" y1="72.35" x2="853.00" y2="72.35" stroke="#e8e8e8" stroke-width="0.8" />
<line x1="851.40" y1="70.50" x2="853.00" y2="70.50" stroke="#e8e8e8" stroke-width="0.8" />
<line x1="851.40" y1="68.65" x2="853.00" y2="68.65" stroke="#e8e8e8" stroke-width="0.8" />
<line x1="851.40" y1="66.80" x2="855.00" y2="66.80" stroke="#e8e8e8" stroke-width="0.8" />
<line x1="851.40" y1="64.95" x2="853.00" y2="64.95" stroke="#e8e8e8" stroke-width="0.8" />
<line x1="851.40" y1="87.15" x2="853.00" y2="87.15" stroke="#e8e8e8" stroke-width="0.8" />
<line x1="851.40" y1="89.00" x2="853.00" y2="89.00" stroke="#e8e8e8" stroke-width="0.8" />
<line x1="851.40" y1="90.85" x2="853.00" y2="90.85" stroke="#e8e8e8" stroke-width="0.8" />
<line x1="851.40" y1="92.70" x2="853.00" y2="92.70" stroke="#e8e8e8" stroke-width="0.8" />
<line x1="851.40" y1="94.55" x2="855.00" y2="94.55" stroke="#e8e8e8" stroke-width="0.8" />
<line x1="851.40" y1="96.40" x2="853.00" y2="96.40" stroke="#e8e8e8" stroke-width="0.8" />
<line x1="851.40" y1="98.25" x2="853.00" y2="98.25" stroke="#e8e8e8" stroke-width="0.8" />
<line x1="851.40" y1="100.10" x2="853.00" y2="100.10" stroke="#e8e8e8" stroke-width="0.8" />
<line x1="851.40" y1="101.95" x2="853.00" y2="101.95" stroke="#e8e8e8" stroke-width="0.8" />
<line x1="851.40" y1="103.80" x2="855.00" y2="103.80" stroke="#e8e8e8" stroke-width="0.8" />
<line x1="851.40" y1="105.65" x2="853.00" y2="105.65" stroke="#e8e8e8" stroke-width="0.8" />
<line x1="851.40" y1="107.50" x2="853.00" y2="107.50" stroke="#e8e8e8" stroke-width="0.8" />
<text x="877.20" y="78.75" font-size="7.2" fill="#e6e6e6" text-anchor="end" >0.5</text>
<text x="877.20" y="87.95" font-size="7.2" fill="#e6e6e6" text-anchor="end" >0.0</text>
<text x="877.20" y="97.15" font-size="7.2" fill="#e6e6e6" text-anchor="end" >-0.5</text>
<text x="877.20" y="106.95" font-size="7.2" fill="#e6e6e6" text-anchor="end" >-1.0</text>
<rect x="18.50" y="122.60" width="861.50" height="45.60" fill="#ffc0cb" />
<rect x="18.50" y="145.70" width="21.90" height="19.70" fill="#ff525c" />
<path d="M19.10 145.7V165.4M20.77 145.7V165.4M22.44 145.7V165.4M24.10 145.7V165.4M25.77 145.7V165.4M27.44 145.7V165.4M29.11 145.7V165.4M30.78 145.7V165.4M32.44 145.7V165.4M34.11 145.7V165.4M35.78 145.7V165.4M37.45 145.7V165.4M39.12 145.7V165.4" fill="none" stroke="#ff0000" stroke-width="1.0" shape-rendering="crispEdges"/>
<rect x="40.40" y="126.00" width="183.00" height="19.70" fill="#92b87e" />
<path d="M41.00 126.0V145.7M42.67 126.0V145.7M44.34 126.0V145.7M46.00 126.0V145.7M47.67 126.0V145.7M49.34 126.0V145.7M51.01 126.0V145.7M52.68 126.0V145.7M54.34 126.0V145.7M56.01 126.0V145.7M57.68 126.0V145.7M59.35 126.0V145.7M61.02 126.0V145.7M62.68 126.0V145.7M64.35 126.0V145.7M66.02 126.0V145.7M67.69 126.0V145.7M69.36 126.0V145.7M71.02 126.0V145.7M72.69 126.0V145.7M74.36 126.0V145.7M76.03 126.0V145.7M77.70 126.0V145.7M79.36 126.0V145.7M81.03 126.0V145.7M82.70 126.0V145.7M84.37 126.0V145.7M86.04 126.0V145.7M87.70 126.0V145.7M89.37 126.0V145.7M91.04 126.0V145.7M92.71 126.0V145.7M94.38 126.0V145.7M96.04 126.0V145.7M97.71 126.0V145.7M99.38 126.0V145.7M101.05 126.0V145.7M102.72 126.0V145.7M104.38 126.0V145.7M106.05 126.0V145.7M107.72 126.0V145.7M109.39 126.0V145.7M111.06 126.0V145.7M112.72 126.0V145.7M114.39 126.0V145.7M116.06 126.0V145.7M117.73 126.0V145.7M119.40 126.0V145.7M121.06 126.0V145.7M122.73 126.0V145.7M124.40 126.0V145.7M126.07 126.0V145.7M127.74 126.0V145.7M129.40 126.0V145.7M131.07 126.0V145.7M132.74 126.0V145.7M134.41 126.0V145.7M136.08 126.0V145.7M137.74 126.0V145.7M139.41 126.0V145.7M141.08 126.0V145.7M142.75 126.0V145.7M144.42 126.0V145.7M146.08 126.0V145.7M147.75 126.0V145.7M149.42 126.0V145.7M151.09 126.0V145.7M152.76 126.0V145.7M154.42 126.0V145.7M156.09 126.0V145.7M157.76 126.0V145.7M159.43 126.0V145.7M161.10 126.0V145.7M162.76 126.0V145.7M164.43 126.0V145.7M166.10 126.0V145.7M167.77 126.0V145.7M169.44 126.0V145.7M171.10 126.0V145.7M172.77 126.0V145.7M174.44 126.0V145.7M176.11 126.0V145.7M177.78 126.0V145.7M179.44 126.0V145.7M181.11 126.0V145.7M182.78 126.0V145.7M184.45 126.0V145.7M186.12 126.0V145.7M187.78 126.0V145.7M189.45 126.0V145.7M191.12 126.0V145.7M192.79 126.0V145.7M194.46 126.0V145.7M196.12 126.0V145.7M197.79 126.0V145.7M199.46 126.0V145.7M201.13 126.0V145.7M202.80 126.0V145.7M204.46 126.0V145.7M206.13 126.0V145.7M207.80 126.0V145.7M209.47 126.0V145.7M211.14 126.0V145.7M212.80 126.0V145.7M214.47 126.0V145.7M216.14 126.0V145.7M217.81 126.0V145.7M219.48 126.0V145.7M221.14 126.0V145.7M222.81 126.0V145.7" fill="none" stroke="#0a580a" stroke-width="1.0" shape-rendering="crispEdges"/>
<rect x="223.40" y="145.70" width="213.80" height="19.70" fill="#ff525c" />
<path d="M224.00 145.7V165.4M225.67 145.7V165.4M227.34 145.7V165.4M229.00 145.7V165.4M230.67 145.7V165.4M232.34 145.7V165.4M234.01 145.7V165.4M235.68 145.7V165.4M237.34 145.7V165.4M239.01 145.7V165.4M240.68 145.7V165.4M242.35 145.7V165.4M244.02 145.7V165.4M245.68 145.7V165.4M247.35 145.7V165.4M249.02 145.7V165.4M250.69 145.7V165.4M252.36 145.7V165.4M254.02 145.7V165.4M255.69 145.7V165.4M257.36 145.7V165.4M259.03 145.7V165.4M260.70 145.7V165.4M262.36 145.7V165.4M264.03 145.7V165.4M265.70 145.7V165.4M267.37 145.7V165.4M269.04 145.7V165.4M270.70 145.7V165.4M272.37 145.7V165.4M274.04 145.7V165.4M275.71 145.7V165.4M277.38 145.7V165.4M279.04 145.7V165.4M280.71 145.7V165.4M282.38 145.7V165.4M284.05 145.7V165.4M285.72 145.7V165.4M287.38 145.7V165.4M289.05 145.7V165.4M290.72 145.7V165.4M292.39 145.7V165.4M294.06 145.7V165.4M295.72 145.7V165.4M297.39 145.7V165.4M299.06 145.7V165.4M300.73 145.7V165.4M302.40 145.7V165.4M304.06 145.7V165.4M305.73 145.7V165.4M307.40 145.7V165.4M309.07 145.7V165.4M310.74 145.7V165.4M312.40 145.7V165.4M314.07 145.7V165.4M315.74 145.7V165.4M317.41 145.7V165.4M319.08 145.7V165.4M320.74 145.7V165.4M322.41 145.7V165.4M324.08 145.7V165.4M325.75 145.7V165.4M327.42 145.7V165.4M329.08 145.7V165.4M330.75 145.7V165.4M332.42 145.7V165.4M334.09 145.7V165.4M335.76 145.7V165.4M337.42 145.7V165.4M339.09 145.7V165.4M340.76 145.7V165.4M342.43 145.7V165.4M344.10 145.7V165.4M345.76 145.7V165.4M347.43 145.7V165.4M349.10 145.7V165.4M350.77 145.7V165.4M352.44 145.7V165.4M354.10 145.7V165.4M355.77 145.7V165.4M357.44 145.7V165.4M359.11 145.7V165.4M360.78 145.7V165.4M362.44 145.7V165.4M364.11 145.7V165.4M365.78 145.7V165.4M367.45 145.7V165.4M369.12 145.7V165.4M370.78 145.7V165.4M372.45 145.7V165.4M374.12 145.7V165.4M375.79 145.7V165.4M377.46 145.7V165.4M379.12 145.7V165.4M380.79 145.7V165.4M382.46 145.7V165.4M384.13 145.7V165.4M385.80 145.7V165.4M387.46 145.7V165.4M389.13 145.7V165.4M390.80 145.7V165.4M392.47 145.7V165.4M394.14 145.7V165.4M395.80 145.7V165.4M397.47 145.7V165.4M399.14 145.7V165.4M400.81 145.7V165.4M402.48 145.7V165.4M404.14 145.7V165.4M405.81 145.7V165.4M407.48 145.7V165.4M409.15 145.7V165.4M410.82 145.7V165.4M412.48 145.7V165.4M414.15 145.7V165.4M415.82 145.7V165.4M417.49 145.7V165.4M419.16 145.7V165.4M420.82 145.7V165.4M422.49 145.7V165.4M424.16 145.7V165.4M425.83 145.7V165.4M427.50 145.7V165.4M429.16 145.7V165.4M430.83 145.7V165.4M432.50 145.7V165.4M434.17 145.7V165.4M435.84 145.7V165.4" fill="none" stroke="#ff0000" stroke-width="1.0" shape-rendering="crispEdges"/>
<rect x="437.20" y="126.00" width="358.10" height="19.70" fill="#92b87e" />
<path d="M437.80 126.0V145.7M439.47 126.0V145.7M441.14 126.0V145.7M442.80 126.0V145.7M444.47 126.0V145.7M446.14 126.0V145.7M447.81 126.0V145.7M449.48 126.0V145.7M451.14 126.0V145.7M452.81 126.0V145.7M454.48 126.0V145.7M456.15 126.0V145.7M457.82 126.0V145.7M459.48 126.0V145.7M461.15 126.0V145.7M462.82 126.0V145.7M464.49 126.0V145.7M466.16 126.0V145.7M467.82 126.0V145.7M469.49 126.0V145.7M471.16 126.0V145.7M472.83 126.0V145.7M474.50 126.0V145.7M476.16 126.0V145.7M477.83 126.0V145.7M479.50 126.0V145.7M481.17 126.0V145.7M482.84 126.0V145.7M484.50 126.0V145.7M486.17 126.0V145.7M487.84 126.0V145.7M489.51 126.0V145.7M491.18 126.0V145.7M492.84 126.0V145.7M494.51 126.0V145.7M496.18 126.0V145.7M497.85 126.0V145.7M499.52 126.0V145.7M501.18 126.0V145.7M502.85 126.0V145.7M504.52 126.0V145.7M506.19 126.0V145.7M507.86 126.0V145.7M509.52 126.0V145.7M511.19 126.0V145.7M512.86 126.0V145.7M514.53 126.0V145.7M516.20 126.0V145.7M517.86 126.0V145.7M519.53 126.0V145.7M521.20 126.0V145.7M522.87 126.0V145.7M524.54 126.0V145.7M526.20 126.0V145.7M527.87 126.0V145.7M529.54 126.0V145.7M531.21 126.0V145.7M532.88 126.0V145.7M534.54 126.0V145.7M536.21 126.0V145.7M537.88 126.0V145.7M539.55 126.0V145.7M541.22 126.0V145.7M542.88 126.0V145.7M544.55 126.0V145.7M546.22 126.0V145.7M547.89 126.0V145.7M549.56 126.0V145.7M551.22 126.0V145.7M552.89 126.0V145.7M554.56 126.0V145.7M556.23 126.0V145.7M557.90 126.0V145.7M559.56 126.0V145.7M561.23 126.0V145.7M562.90 126.0V145.7M564.57 126.0V145.7M566.24 126.0V145.7M567.90 126.0V145.7M569.57 126.0V145.7M571.24 126.0V145.7M572.91 126.0V145.7M574.58 126.0V145.7M576.24 126.0V145.7M577.91 126.0V145.7M579.58 126.0V145.7M581.25 126.0V145.7M582.92 126.0V145.7M584.58 126.0V145.7M586.25 126.0V145.7M587.92 126.0V145.7M589.59 126.0V145.7M591.26 126.0V145.7M592.92 126.0V145.7M594.59 126.0V145.7M596.26 126.0V145.7M597.93 126.0V145.7M599.60 126.0V145.7M601.26 126.0V145.7M602.93 126.0V145.7M604.60 126.0V145.7M606.27 126.0V145.7M607.94 126.0V145.7M609.60 126.0V145.7M611.27 126.0V145.7M612.94 126.0V145.7M614.61 126.0V145.7M616.28 126.0V145.7M617.94 126.0V145.7M619.61 126.0V145.7M621.28 126.0V145.7M622.95 126.0V145.7M624.62 126.0V145.7M626.28 126.0V145.7M627.95 126.0V145.7M629.62 126.0V145.7M631.29 126.0V145.7M632.96 126.0V145.7M634.62 126.0V145.7M636.29 126.0V145.7M637.96 126.0V145.7M639.63 126.0V145.7M641.30 126.0V145.7M642.96 126.0V145.7M644.63 126.0V145.7M646.30 126.0V145.7M647.97 126.0V145.7M649.64 126.0V145.7M651.30 126.0V145.7M652.97 126.0V145.7M654.64 126.0V145.7M656.31 126.0V145.7M657.98 126.0V145.7M659.64 126.0V145.7M661.31 126.0V145.7M662.98 126.0V145.7M664.65 126.0V145.7M666.32 126.0V145.7M667.98 126.0V145.7M669.65 126.0V145.7M671.32 126.0V145.7M672.99 126.0V145.7M674.66 126.0V145.7M676.32 126.0V145.7M677.99 126.0V145.7M679.66 126.0V145.7M681.33 126.0V145.7M683.00 126.0V145.7M684.66 126.0V145.7M686.33 126.0V145.7M688.00 126.0V145.7M689.67 126.0V145.7M691.34 126.0V145.7M693.00 126.0V145.7M694.67 126.0V145.7M696.34 126.0V145.7M698.01 126.0V145.7M699.68 126.0V145.7M701.34 126.0V145.7M703.01 126.0V145.7M704.68 126.0V145.7M706.35 126.0V145.7M708.02 126.0V145.7M709.68 126.0V145.7M711.35 126.0V145.7M713.02 126.0V145.7M714.69 126.0V145.7M716.36 126.0V145.7M718.02 126.0V145.7M719.69 126.0V145.7M721.36 126.0V145.7M723.03 126.0V145.7M724.70 126.0V145.7M726.36 126.0V145.7M728.03 126.0V145.7M729.70 126.0V145.7M731.37 126.0V145.7M733.04 126.0V145.7M734.70 126.0V145.7M736.37 126.0V145.7M738.04 126.0V145.7M739.71 126.0V145.7M741.38 126.0V145.7M743.04 126.0V145.7M744.71 126.0V145.7M746.38 126.0V145.7M748.05 126.0V145.7M749.72 126.0V145.7M751.38 126.0V145.7M753.05 126.0V145.7M754.72 126.0V145.7M756.39 126.0V145.7M758.06 126.0V145.7M759.72 126.0V145.7M761.39 126.0V145.7M763.06 126.0V145.7M764.73 126.0V145.7M766.40 126.0V145.7M768.06 126.0V145.7M769.73 126.0V145.7M771.40 126.0V145.7M773.07 126.0V145.7M774.74 126.0V145.7M776.40 126.0V145.7M778.07 126.0V145.7M779.74 126.0V145.7M781.41 126.0V145.7M783.08 126.0V145.7M784.74 126.0V145.7M786.41 126.0V145.7M788.08 126.0V145.7M789.75 126.0V145.7M791.42 126.0V145.7M793.08 126.0V145.7M794.75 126.0V145.7" fill="none" stroke="#0a580a" stroke-width="1.0" shape-rendering="crispEdges"/>
<line x1="40.40" y1="145.70" x2="223.40" y2="145.70" stroke="#0b4d0b" stroke-width="0.6" />
<line x1="437.20" y1="145.70" x2="795.30" y2="145.70" stroke="#0b4d0b" stroke-width="0.6" />
<line x1="40.40" y1="122.60" x2="40.40" y2="168.20" stroke="#8c9c58" stroke-width="0.8" />
<line x1="223.40" y1="122.60" x2="223.40" y2="168.20" stroke="#f02020" stroke-width="0.7" />
<line x1="437.20" y1="122.60" x2="437.20" y2="168.20" stroke="#8c9c58" stroke-width="0.8" />
<polyline points="18.60,155.30 20.60,155.30 23.10,135.60 29.40,135.60 31.00,155.30 36.30,155.30 38.70,135.60 64.40,135.60 66.20,155.30 74.40,155.30 76.20,135.60 99.40,135.60 101.50,155.30 111.30,155.30 113.10,135.60 145.60,135.60 147.50,155.30 156.50,155.30 158.10,135.60 158.10,135.60 159.40,155.30 178.10,155.30 179.80,135.60 214.40,135.60 216.00,155.30 216.00,155.30 217.50,135.60 219.40,135.60 221.20,155.30 269.80,155.30 271.30,135.60 278.10,135.60 279.80,155.30 309.40,155.30 311.20,135.60 314.40,135.60 316.20,155.30 323.10,155.30 325.00,135.60 327.80,135.60 329.80,155.30 356.20,155.30 357.80,135.60 357.80,135.60 359.40,155.30 361.20,155.30 363.10,135.60 369.80,135.60 371.50,155.30 401.20,155.30 403.10,135.60 464.00,135.60 466.00,155.30 471.20,155.30 473.10,135.60 473.10,135.60 474.80,155.30 479.40,155.30 481.50,135.60 484.40,135.60 486.20,155.30 488.10,155.30 489.80,135.60 489.80,135.60 491.50,155.30 518.10,155.30 520.00,135.60 552.50,135.60 554.40,155.30 559.80,155.30 561.90,135.60 579.80,135.60 581.50,155.30 594.40,155.30 596.50,135.60 638.10,135.60 640.00,155.30 650.00,155.30 651.50,135.60 681.00,135.60 682.80,155.30 695.00,155.30 696.30,135.60 795.30,135.60" fill="none" stroke="#101010" stroke-width="1.05" stroke-linejoin="round"/>
<line x1="850.80" y1="123.60" x2="850.80" y2="168.20" stroke="#2a2a2a" stroke-width="1.1" />
<line x1="850.80" y1="145.70" x2="854.40" y2="145.70" stroke="#2a2a2a" stroke-width="0.8" />
<line x1="850.80" y1="143.74" x2="852.40" y2="143.74" stroke="#2a2a2a" stroke-width="0.8" />
<line x1="850.80" y1="141.78" x2="852.40" y2="141.78" stroke="#2a2a2a" stroke-width="0.8" />
<line x1="850.80" y1="139.82" x2="852.40" y2="139.82" stroke="#2a2a2a" stroke-width="0.8" />
<line x1="850.80" y1="137.86" x2="852.40" y2="137.86" stroke="#2a2a2a" stroke-width="0.8" />
<line x1="850.80" y1="135.90" x2="854.40" y2="135.90" stroke="#2a2a2a" stroke-width="0.8" />
<line x1="850.80" y1="133.94" x2="852.40" y2="133.94" stroke="#2a2a2a" stroke-width="0.8" />
<line x1="850.80" y1="131.98" x2="852.40" y2="131.98" stroke="#2a2a2a" stroke-width="0.8" />
<line x1="850.80" y1="130.02" x2="852.40" y2="130.02" stroke="#2a2a2a" stroke-width="0.8" />
<line x1="850.80" y1="128.06" x2="852.40" y2="128.06" stroke="#2a2a2a" stroke-width="0.8" />
<line x1="850.80" y1="126.10" x2="854.40" y2="126.10" stroke="#2a2a2a" stroke-width="0.8" />
<line x1="850.80" y1="124.14" x2="852.40" y2="124.14" stroke="#2a2a2a" stroke-width="0.8" />
<line x1="850.80" y1="147.66" x2="852.40" y2="147.66" stroke="#2a2a2a" stroke-width="0.8" />
<line x1="850.80" y1="149.62" x2="852.40" y2="149.62" stroke="#2a2a2a" stroke-width="0.8" />
<line x1="850.80" y1="151.58" x2="852.40" y2="151.58" stroke="#2a2a2a" stroke-width="0.8" />
<line x1="850.80" y1="153.54" x2="852.40" y2="153.54" stroke="#2a2a2a" stroke-width="0.8" />
<line x1="850.80" y1="155.50" x2="854.40" y2="155.50" stroke="#2a2a2a" stroke-width="0.8" />
<line x1="850.80" y1="157.46" x2="852.40" y2="157.46" stroke="#2a2a2a" stroke-width="0.8" />
<line x1="850.80" y1="159.42" x2="852.40" y2="159.42" stroke="#2a2a2a" stroke-width="0.8" />
<line x1="850.80" y1="161.38" x2="852.40" y2="161.38" stroke="#2a2a2a" stroke-width="0.8" />
<line x1="850.80" y1="163.34" x2="852.40" y2="163.34" stroke="#2a2a2a" stroke-width="0.8" />
<line x1="850.80" y1="165.30" x2="854.40" y2="165.30" stroke="#2a2a2a" stroke-width="0.8" />
<line x1="850.80" y1="167.26" x2="852.40" y2="167.26" stroke="#2a2a2a" stroke-width="0.8" />
<text x="877.20" y="138.85" font-size="7.2" fill="#2c2c2c" text-anchor="end" >0.5</text>
<text x="877.20" y="148.85" font-size="7.2" fill="#2c2c2c" text-anchor="end" >0.0</text>
<text x="877.20" y="158.75" font-size="7.2" fill="#2c2c2c" text-anchor="end" >-0.5</text>
<rect x="18.50" y="183.20" width="861.50" height="97.60" fill="#7b9ec7" />
<line x1="19.60" y1="194.00" x2="848.80" y2="194.00" stroke="#eef3fa" stroke-width="0.95" stroke-dasharray="2.1 1.35"/>
<line x1="19.60" y1="207.20" x2="848.80" y2="207.20" stroke="#eef3fa" stroke-width="0.95" stroke-dasharray="2.1 1.35"/>
<line x1="19.60" y1="216.40" x2="848.80" y2="216.40" stroke="#eef3fa" stroke-width="0.95" stroke-dasharray="2.1 1.35"/>
<line x1="19.60" y1="220.40" x2="848.80" y2="220.40" stroke="#eef3fa" stroke-width="0.95" stroke-dasharray="2.1 1.35"/>
<line x1="19.60" y1="238.10" x2="848.80" y2="238.10" stroke="#eef3fa" stroke-width="0.95" stroke-dasharray="2.1 1.35"/>
<line x1="19.60" y1="242.50" x2="848.80" y2="242.50" stroke="#eef3fa" stroke-width="0.95" stroke-dasharray="2.1 1.35"/>
<line x1="19.60" y1="251.20" x2="848.80" y2="251.20" stroke="#eef3fa" stroke-width="0.95" stroke-dasharray="2.1 1.35"/>
<line x1="19.60" y1="264.50" x2="848.80" y2="264.50" stroke="#eef3fa" stroke-width="0.95" stroke-dasharray="2.1 1.35"/>
<line x1="40.40" y1="183.20" x2="40.40" y2="280.80" stroke="#469a6a" stroke-width="1.5" />
<line x1="223.40" y1="183.20" x2="223.40" y2="280.80" stroke="#d8323c" stroke-width="0.7" />
<line x1="437.20" y1="183.20" x2="437.20" y2="280.80" stroke="#469a6a" stroke-width="1.5" />
<polyline points="18.50,229.30 23.70,220.30 27.00,220.30 29.40,229.30 32.50,231.10 36.90,225.50 38.70,220.30 40.60,224.30 43.10,220.30 45.00,220.30 48.70,238.00 52.50,220.30 62.50,220.30 65.00,224.30 67.50,225.50 71.20,233.00 73.70,233.00 77.50,225.50 79.40,228.00 82.50,224.30 85.00,220.30 101.20,220.30 102.50,228.00 106.20,238.00 108.70,238.00 112.50,230.50 116.20,231.70 120.00,236.70 122.50,234.30 125.00,237.60 127.50,233.00 130.00,224.50 136.00,224.50 139.50,224.00 142.00,220.30 143.50,224.00 146.00,233.50 148.50,238.00 153.00,238.00 155.50,224.00 157.00,220.30 159.00,232.00 161.50,238.00 164.00,232.00 167.00,236.50 170.00,233.50 174.50,236.50 177.50,224.00 180.50,221.50 185.50,224.50 188.50,228.50 192.00,224.50 196.50,229.00 200.50,233.50 203.50,229.00 206.00,220.30 209.00,222.50 212.50,231.00 216.00,237.50 218.00,225.00 219.50,231.00 221.50,238.00 230.50,238.00 233.00,230.00 236.50,234.00 239.50,238.00 246.00,238.00 249.00,231.50 253.00,224.50 255.00,225.50 258.00,235.00 261.00,238.00 269.00,238.00 271.50,233.00 274.50,230.00 277.50,230.00 280.50,234.00 284.00,238.00 288.50,238.00 291.50,220.30 297.50,220.30 300.50,225.00 303.50,233.50 305.50,237.50 308.00,224.00 309.50,220.30 313.00,220.30 315.00,226.00 317.50,233.00 321.50,233.00 324.00,222.00 326.00,220.30 329.00,226.00 331.50,238.00 338.00,238.00 340.50,233.00 343.00,238.00 346.00,238.00 348.50,229.00 351.00,238.00 362.50,238.00 365.50,229.00 367.50,220.50 370.50,227.00 372.50,233.00 374.00,229.00 376.50,236.00 379.00,225.50 381.50,224.50 384.00,233.00 387.00,238.00 390.00,238.00 393.00,229.00 394.50,220.30 401.00,220.30 403.50,224.50 406.50,224.50 409.50,220.30 418.50,220.30 421.00,224.50 424.00,229.00 426.50,224.50 429.50,220.30 439.00,220.30 442.50,220.30 445.50,229.50 448.50,233.50 451.50,233.50 454.50,220.30 466.00,220.30 468.50,224.80 471.50,224.80 473.00,220.30 474.50,224.80 479.50,224.80 481.50,220.30 489.50,220.30 492.50,229.00 494.00,220.30 496.50,220.30 500.50,233.00 502.50,229.50 505.00,238.50 507.00,238.50 508.50,233.00 511.50,233.00 513.50,238.50 518.00,238.50 520.00,229.00 523.50,224.50 530.50,224.50 532.50,229.00 536.00,226.00 538.50,229.00 541.50,226.50 544.00,229.50 546.50,221.00 548.50,231.00 552.00,237.00 555.50,238.00 558.50,230.00 561.50,220.50 563.50,224.50 566.00,220.30 568.00,220.30 570.00,231.50 573.50,224.50 576.00,233.00 579.00,238.00 587.50,238.00 590.50,229.00 593.50,221.00 596.00,225.50 599.00,233.00 603.00,226.50 606.00,221.00 608.50,224.50 611.00,231.50 613.00,221.00 617.50,225.50 620.50,233.50 623.50,233.50 626.50,229.00 629.50,229.00 631.50,224.50 634.00,220.30 640.00,220.30 642.00,224.50 645.00,224.50 647.50,229.50 650.00,224.50 652.50,229.50 654.50,220.30 658.00,220.30 661.00,229.00 663.50,233.00 666.50,233.00 668.00,237.50 670.50,229.00 673.00,233.00 675.00,237.50 678.00,233.50 680.50,238.50 683.50,238.50 686.00,233.00 690.50,233.00 693.50,224.50 695.50,220.30 697.50,224.50 699.50,220.30 701.50,229.00 703.00,233.00 705.50,224.50 707.50,220.30 715.50,220.30 717.00,224.50 718.50,220.30 729.50,220.30 732.00,224.50 734.00,220.30 738.50,220.30 741.50,233.00 744.00,238.00 748.00,238.00 751.50,229.00 753.50,232.50 756.00,229.00 758.00,233.00 760.50,229.50 763.00,220.30 771.00,220.30 773.50,224.50 776.00,220.30 778.00,220.30 780.00,233.00 783.50,233.00 785.50,229.50 787.00,233.00 790.00,229.50 793.00,233.00 795.00,228.50" fill="none" stroke="#e03c48" stroke-width="0.9" stroke-linejoin="round"/>
<polyline points="18.50,231.10 27.50,231.10 27.50,232.80 33.10,232.80 33.10,226.80 45.00,226.80 45.00,231.10 65.00,231.10 65.00,239.00 86.90,239.00 86.90,244.30 100.00,244.30 100.00,252.00 111.20,252.00 111.20,255.00 132.50,255.00 132.50,258.00 142.50,258.00 142.50,261.30 151.60,261.30 151.60,226.90 163.10,226.90 163.10,225.00 168.10,225.00 168.10,219.80 183.40,219.80 183.40,237.30 196.20,237.30 196.20,242.30 208.10,242.30 208.10,246.00 216.30,246.00 216.30,226.90 231.90,226.90 231.90,222.30 241.20,222.30 241.20,213.80 246.20,213.80 246.20,204.80 269.80,204.80 269.80,196.00 288.80,196.00 288.80,191.50 311.40,191.50 311.40,231.00 321.20,231.00 321.20,226.90 333.10,226.90 333.10,224.80 343.80,224.80 343.80,222.30 353.10,222.30 353.10,218.10 356.20,218.10 356.20,213.80 361.20,213.80 361.20,205.00 375.00,205.00 375.00,202.80 388.10,202.80 388.10,198.10 413.30,198.10 413.30,233.10 423.80,233.10 423.80,235.30 441.20,235.30 441.20,244.40 464.60,244.40 464.60,252.60 473.40,252.60 473.40,257.50 485.00,257.50 485.00,261.50 491.20,261.50 491.20,265.50 528.80,265.50 528.80,268.00 540.00,268.00 540.00,270.50 547.50,270.50 547.50,272.00 557.20,272.00 557.20,227.80 562.50,227.80 562.50,231.30 588.30,231.30 588.30,220.00 604.80,220.00 604.80,237.50 609.40,237.50 609.40,245.00 618.10,245.00 618.10,250.60 626.20,250.60 626.20,252.80 630.00,252.80 630.00,255.30 638.90,255.30 638.90,263.80 651.20,263.80 651.20,266.60 671.20,266.60 671.20,270.50 685.40,270.50 685.40,226.90 699.60,226.90 699.60,231.00 715.00,231.00 715.00,233.00 725.00,233.00 725.00,235.20 728.80,235.20 728.80,237.40 738.60,237.40 738.60,246.00 764.40,246.00 764.40,248.20 771.20,248.20 771.20,250.60 795.00,250.60" fill="none" stroke="#8a1212" stroke-width="1.25" stroke-linejoin="miter"/>
<polyline points="18.50,229.00 26.20,229.00 27.50,231.20 28.80,229.00 44.30,229.00 45.60,231.20 46.90,229.00 65.10,229.00 66.20,238.00 67.30,229.00 86.00,229.00 87.20,233.00 88.40,229.00 100.10,229.00 101.20,237.40 102.30,229.00 113.20,229.00 114.40,231.20 115.60,229.00 133.20,229.00 134.40,231.40 135.60,229.00 136.20,229.00 137.40,231.40 138.60,229.00 139.40,229.00 140.60,231.40 141.80,229.00 142.60,229.00 143.80,231.40 145.00,229.00 163.40,229.00 164.60,226.60 165.80,229.00 167.30,229.00 168.60,225.00 169.90,229.00 184.00,229.00 185.00,235.00 186.00,229.00 196.30,229.00 197.50,232.40 198.70,229.00 208.20,229.00 209.40,233.00 210.60,229.00 231.40,229.00 232.50,225.20 233.60,229.00 241.30,229.00 242.50,220.60 243.70,229.00 246.70,229.00 247.90,220.60 249.10,229.00 269.90,229.00 271.00,220.60 272.10,229.00 288.30,229.00 289.40,225.00 290.50,229.00 333.20,229.00 334.40,227.40 335.60,229.00 344.40,229.00 345.60,227.40 346.80,229.00 353.50,229.00 354.60,225.00 355.70,229.00 356.50,229.00 357.60,225.40 358.70,229.00 359.60,229.00 360.60,226.00 361.60,229.00 362.00,229.00 363.00,220.80 364.00,229.00 375.00,229.00 376.20,227.00 377.40,229.00 388.10,229.00 389.40,225.00 390.70,229.00 413.70,229.00 415.00,232.60 416.30,229.00 423.10,229.00 424.40,231.40 425.70,229.00 441.50,229.00 442.80,237.50 444.10,229.00 465.00,229.00 466.20,237.50 467.40,229.00 473.10,229.00 474.40,232.60 475.70,229.00 484.90,229.00 486.20,232.60 487.50,229.00 489.90,229.00 491.20,232.60 492.50,229.00 529.30,229.00 530.60,231.40 531.90,229.00 540.30,229.00 541.60,231.40 542.90,229.00 546.80,229.00 548.10,231.40 549.40,229.00 607.90,229.00 609.00,236.60 610.10,229.00 610.50,229.00 611.60,237.00 612.70,229.00 618.80,229.00 620.00,232.60 621.20,229.00 626.30,229.00 627.40,231.20 628.50,229.00 629.70,229.00 630.80,231.20 631.90,229.00 638.80,229.00 639.80,237.50 640.80,229.00 651.80,229.00 653.10,231.20 654.40,229.00 659.90,229.00 661.20,231.20 662.50,229.00 671.80,229.00 673.10,231.20 674.40,229.00 698.80,229.00 700.00,231.40 701.20,229.00 715.00,229.00 716.20,231.00 717.40,229.00 725.70,229.00 726.80,231.00 727.90,229.00 728.80,229.00 729.90,231.00 731.00,229.00 738.30,229.00 739.40,237.50 740.50,229.00 765.50,229.00 766.90,231.30 768.30,229.00 771.40,229.00 772.80,231.30 774.20,229.00 795.30,229.00" fill="none" stroke="#0c0c0c" stroke-width="1.25" stroke-linejoin="round"/>
<polyline points="588.60,229.00 589.60,220.20 590.40,220.20 591.60,229.00" fill="none" stroke="#111111" stroke-width="0.9" />
<polyline points="16.80,228.70 20.80,227.50 25.20,225.40 29.50,228.70 32.10,230.60 38.30,227.90 44.50,224.70 48.30,227.50 50.80,227.10 55.80,219.40 61.40,215.00 65.20,214.10 68.30,216.90 72.10,222.50 75.80,224.60 79.50,223.70 84.50,219.40 89.50,217.90 94.50,213.70 98.90,211.60 101.40,213.10 105.80,220.40 110.80,224.10 115.80,225.60 118.30,228.20 124.50,229.10 130.80,227.00 137.10,225.40 141.40,224.50 144.50,228.90 148.30,234.50 152.10,235.10 157.10,231.40 161.40,234.50 168.30,236.10 173.30,235.70 176.40,232.60 179.50,223.90 182.70,221.40 188.30,222.40 193.90,222.60 198.30,227.00 201.40,228.60 205.80,225.10 208.30,224.10 213.30,227.60 218.30,228.90 223.30,233.20 228.30,236.40 232.10,235.10 237.10,237.60 245.80,239.10 252.10,235.10 255.80,234.50 260.80,240.70 267.10,246.40 271.40,242.60 275.80,239.50 280.80,240.70 287.10,242.00 293.30,235.10 298.30,231.60 304.50,232.90 308.30,230.10 311.40,227.90 315.80,229.90 320.80,229.50 325.80,228.20 329.50,232.00 331.40,234.50 337.10,235.70 343.30,238.90 348.90,238.20 353.30,240.70 360.80,243.90 365.80,238.90 371.40,237.60 379.50,235.10 383.30,237.60 387.10,239.90 390.80,238.90 395.80,232.00 400.80,228.20 408.30,222.60 413.30,221.70 418.30,222.60 424.50,223.20 432.10,220.70 438.10,217.90 440.80,216.60 445.80,219.50 451.40,222.40 456.40,219.50 462.10,208.90 466.40,207.00 470.80,208.90 477.70,212.00 483.30,208.90 488.90,209.10 493.30,212.00 498.30,214.50 503.30,219.50 508.30,222.00 513.30,226.40 516.40,228.20 522.10,227.40 529.50,224.10 535.80,224.90 544.50,226.10 550.80,228.60 556.40,230.10 563.30,228.20 574.50,227.00 580.80,231.40 585.80,235.10 590.80,233.20 597.10,227.60 603.30,221.40 607.10,219.90 613.30,222.00 619.50,222.00 625.80,223.90 630.20,223.20 633.30,215.10 637.10,207.60 639.50,207.00 643.90,210.70 648.30,213.90 653.90,217.00 658.30,216.40 664.50,220.70 669.50,222.60 675.80,225.10 682.10,229.10 687.10,231.10 693.30,230.70 699.50,228.20 708.30,227.60 718.30,225.10 728.30,223.20 735.80,220.70 739.50,222.60 743.30,226.40 747.10,228.20 759.50,227.90 764.50,225.10 769.50,224.10 775.80,224.90 783.30,227.00 793.30,228.60" fill="none" stroke="#ff7a1c" stroke-width="1.5" stroke-linejoin="round"/>
<polyline points="18.50,228.60 22.50,227.40 26.90,225.30 31.20,228.60 33.80,230.50 40.00,227.80 46.20,224.60 50.00,227.40 52.50,227.00 57.50,219.30 63.10,214.90 66.90,214.00 70.00,216.80 73.80,222.40 77.50,224.50 81.20,223.60 86.20,219.30 91.20,217.80 96.20,213.60 100.60,211.50 103.10,213.00 107.50,220.30 112.50,224.00 117.50,225.50 120.00,228.10 126.20,229.00 132.50,226.90 138.80,225.30 143.10,224.40 146.20,228.80 150.00,234.40 153.80,235.00 158.80,231.30 163.10,234.40 170.00,236.00 175.00,235.60 178.10,232.50 181.20,223.80 184.40,221.30 190.00,222.30 195.60,222.50 200.00,226.90 203.10,228.50 207.50,225.00 210.00,224.00 215.00,227.50 220.00,228.80 225.00,233.10 230.00,236.30 233.80,235.00 238.80,237.50 247.50,239.00 253.80,235.00 257.50,234.40 262.50,240.60 268.80,246.30 273.10,242.50 277.50,239.40 282.50,240.60 288.80,241.90 295.00,235.00 300.00,231.50 306.20,232.80 310.00,230.00 313.10,227.80 317.50,229.80 322.50,229.40 327.50,228.10 331.20,231.90 333.10,234.40 338.80,235.60 345.00,238.80 350.60,238.10 355.00,240.60 362.50,243.80 367.50,238.80 373.10,237.50 381.20,235.00 385.00,237.50 388.80,239.80 392.50,238.80 397.50,231.90 402.50,228.10 410.00,222.50 415.00,221.60 420.00,222.50 426.20,223.10 433.80,220.60 439.80,217.80 442.50,216.50 447.50,219.40 453.10,222.30 458.10,219.40 463.80,208.80 468.10,206.90 472.50,208.80 479.40,211.90 485.00,208.80 490.60,209.00 495.00,211.90 500.00,214.40 505.00,219.40 510.00,221.90 515.00,226.30 518.10,228.10 523.80,227.30 531.20,224.00 537.50,224.80 546.20,226.00 552.50,228.50 558.10,230.00 565.00,228.10 576.20,226.90 582.50,231.30 587.50,235.00 592.50,233.10 598.80,227.50 605.00,221.30 608.80,219.80 615.00,221.90 621.20,221.90 627.50,223.80 631.90,223.10 635.00,215.00 638.80,207.50 641.20,206.90 645.60,210.60 650.00,213.80 655.60,216.90 660.00,216.30 666.20,220.60 671.20,222.50 677.50,225.00 683.80,229.00 688.80,231.00 695.00,230.60 701.20,228.10 710.00,227.50 720.00,225.00 730.00,223.10 737.50,220.60 741.20,222.50 745.00,226.30 748.80,228.10 761.20,227.80 766.20,225.00 771.20,224.00 777.50,224.80 785.00,226.90 795.00,228.50" fill="none" stroke="#1010f4" stroke-width="1.5" stroke-linejoin="round"/>
<line x1="850.40" y1="184.80" x2="850.40" y2="280.80" stroke="#9dbada" stroke-width="0.9" />
<line x1="850.40" y1="185.20" x2="854.20" y2="185.20" stroke="#9dbada" stroke-width="0.7" />
<line x1="850.40" y1="189.62" x2="852.20" y2="189.62" stroke="#9dbada" stroke-width="0.7" />
<line x1="850.40" y1="194.04" x2="852.20" y2="194.04" stroke="#9dbada" stroke-width="0.7" />
<line x1="850.40" y1="198.46" x2="852.20" y2="198.46" stroke="#9dbada" stroke-width="0.7" />
<line x1="850.40" y1="202.88" x2="852.20" y2="202.88" stroke="#9dbada" stroke-width="0.7" />
<line x1="850.40" y1="207.30" x2="854.20" y2="207.30" stroke="#9dbada" stroke-width="0.7" />
<line x1="850.40" y1="211.72" x2="852.20" y2="211.72" stroke="#9dbada" stroke-width="0.7" />
<line x1="850.40" y1="216.14" x2="852.20" y2="216.14" stroke="#9dbada" stroke-width="0.7" />
<line x1="850.40" y1="220.56" x2="852.20" y2="220.56" stroke="#9dbada" stroke-width="0.7" />
<line x1="850.40" y1="224.98" x2="852.20" y2="224.98" stroke="#9dbada" stroke-width="0.7" />
<line x1="850.40" y1="229.40" x2="854.20" y2="229.40" stroke="#9dbada" stroke-width="0.7" />
<line x1="850.40" y1="233.82" x2="852.20" y2="233.82" stroke="#9dbada" stroke-width="0.7" />
<line x1="850.40" y1="238.24" x2="852.20" y2="238.24" stroke="#9dbada" stroke-width="0.7" />
<line x1="850.40" y1="242.66" x2="852.20" y2="242.66" stroke="#9dbada" stroke-width="0.7" />
<line x1="850.40" y1="247.08" x2="852.20" y2="247.08" stroke="#9dbada" stroke-width="0.7" />
<line x1="850.40" y1="251.50" x2="854.20" y2="251.50" stroke="#9dbada" stroke-width="0.7" />
<line x1="850.40" y1="255.92" x2="852.20" y2="255.92" stroke="#9dbada" stroke-width="0.7" />
<line x1="850.40" y1="260.34" x2="852.20" y2="260.34" stroke="#9dbada" stroke-width="0.7" />
<line x1="850.40" y1="264.76" x2="852.20" y2="264.76" stroke="#9dbada" stroke-width="0.7" />
<line x1="850.40" y1="269.18" x2="852.20" y2="269.18" stroke="#9dbada" stroke-width="0.7" />
<line x1="850.40" y1="273.60" x2="854.20" y2="273.60" stroke="#9dbada" stroke-width="0.7" />
<line x1="850.40" y1="278.02" x2="852.20" y2="278.02" stroke="#9dbada" stroke-width="0.7" />
<text x="877.20" y="209.80" font-size="7.4" fill="#a9c2df" text-anchor="end" >50</text>
<text x="877.20" y="231.90" font-size="7.4" fill="#a9c2df" text-anchor="end" >0</text>
<text x="877.20" y="253.90" font-size="7.4" fill="#a9c2df" text-anchor="end" >-50</text>
<text x="877.20" y="275.80" font-size="7.4" fill="#a9c2df" text-anchor="end" >-100</text>
<rect x="18.50" y="296.20" width="861.50" height="135.20" fill="#000" />
<line x1="40.40" y1="296.20" x2="40.40" y2="411.80" stroke="#066206" stroke-width="1.4" />
<line x1="223.40" y1="296.20" x2="223.40" y2="411.80" stroke="#d80000" stroke-width="1.0" />
<line x1="437.20" y1="296.20" x2="437.20" y2="411.80" stroke="#066206" stroke-width="1.4" />
<polyline points="18.50,375.00 21.20,372.50 25.00,370.00 28.80,373.10 31.20,375.60 35.00,373.80 38.10,373.80 41.20,371.30 45.00,369.80 46.90,370.60" fill="none" stroke="#f6f6f6" stroke-width="1.85" stroke-linejoin="round" stroke-linecap="round"/>
<polyline points="48.10,376.20 50.60,373.10 53.10,368.10 54.40,362.80 58.10,362.80 62.50,359.00 66.20,357.80 68.80,361.90 72.50,364.00 76.90,361.30 81.20,360.60 83.80,355.60 87.50,353.80 90.00,354.40 93.10,350.00 97.50,346.00 101.90,345.60 103.80,348.80 108.80,349.80 112.50,348.80 116.20,348.50 121.20,350.60 125.00,351.50 130.00,349.00 134.40,346.30 135.60,347.80 140.00,346.90 143.80,344.40 145.60,346.90 146.20,351.30 149.40,354.00 152.50,353.10 155.60,351.30" fill="none" stroke="#f6f6f6" stroke-width="1.85" stroke-linejoin="round" stroke-linecap="round"/>
<polyline points="156.20,347.80 158.80,350.60 162.50,356.30 165.60,354.40 168.10,358.10 171.20,356.90 175.00,356.30 176.90,357.50" fill="none" stroke="#f6f6f6" stroke-width="1.85" stroke-linejoin="round" stroke-linecap="round"/>
<polyline points="177.80,351.30 179.40,348.10 181.20,345.60 185.00,346.90 189.40,347.50 193.80,346.50 196.90,345.60 198.10,347.30" fill="none" stroke="#f6f6f6" stroke-width="1.85" stroke-linejoin="round" stroke-linecap="round"/>
<polyline points="199.40,354.00 201.90,350.60 206.20,345.00 208.80,343.10 211.20,346.30 215.00,349.80 218.80,348.10 220.60,346.90" fill="none" stroke="#f6f6f6" stroke-width="1.85" stroke-linejoin="round" stroke-linecap="round"/>
<polyline points="221.90,350.00 225.00,353.10 229.40,354.80 231.90,356.30 233.10,352.50 237.50,355.60 241.20,358.80 243.80,358.10 246.20,361.30 250.60,358.80 254.40,356.30 257.50,360.60 261.20,365.60 265.00,368.80 268.10,373.80 270.60,375.00 273.80,371.50 278.10,370.60 281.20,373.50 284.40,375.60 286.20,379.80 290.00,376.30 293.10,373.80 296.90,370.60 300.00,373.10 303.80,373.80 305.60,376.90" fill="none" stroke="#f6f6f6" stroke-width="1.85" stroke-linejoin="round" stroke-linecap="round"/>
<polyline points="308.10,371.30 310.60,370.30 314.40,372.50 316.90,376.90 321.20,375.60 325.00,372.50 328.10,371.90 330.60,380.00 332.50,380.60 335.60,377.80 338.80,380.60 342.50,384.00 348.80,383.50 351.20,388.10 355.00,386.90 358.10,390.60 361.20,395.00 364.40,393.10 368.10,388.80 371.20,393.80 375.00,393.10 378.10,390.60 381.20,393.80 385.00,397.50 389.40,400.60 393.80,398.10" fill="none" stroke="#f6f6f6" stroke-width="1.85" stroke-linejoin="round" stroke-linecap="round"/>
<polyline points="395.00,390.00 398.10,393.80 401.90,391.90 405.00,393.80 406.90,389.40 413.10,386.90 416.90,390.00 421.20,387.30 424.40,387.50 430.00,384.40 436.20,382.80 438.10,380.00 440.60,376.50 445.00,378.80 450.00,380.00 453.80,378.80 456.90,374.00 458.50,373.80" fill="none" stroke="#f6f6f6" stroke-width="1.85" stroke-linejoin="round" stroke-linecap="round"/>
<polyline points="459.40,365.60 462.50,361.50 467.50,361.90 472.50,360.00 477.50,358.50 480.60,357.50" fill="none" stroke="#f6f6f6" stroke-width="1.85" stroke-linejoin="round" stroke-linecap="round"/>
<polyline points="481.20,351.30 485.00,351.50 488.80,349.40 492.50,347.80 497.50,347.30 501.20,349.80 505.00,348.50 510.00,348.10 515.00,351.00 520.00,350.00 525.00,348.10 529.40,344.80 533.80,346.50 538.80,344.80 545.00,344.40 550.00,345.60 555.00,348.10 560.00,345.60 565.00,345.00 568.10,343.10 569.40,345.60 573.80,343.80 578.80,344.40 582.50,348.10 588.10,352.50" fill="none" stroke="#f6f6f6" stroke-width="1.85" stroke-linejoin="round" stroke-linecap="round"/>
<polyline points="590.00,347.50 592.50,348.80 596.20,346.30 600.00,342.50 605.00,339.80 610.00,337.50 611.20,341.30 615.00,339.40 618.80,336.90 623.10,338.10 627.50,337.30 632.20,338.80" fill="none" stroke="#f6f6f6" stroke-width="1.85" stroke-linejoin="round" stroke-linecap="round"/>
<polyline points="632.50,325.60 634.40,322.50 638.10,320.30 641.20,322.50 645.00,321.30 648.10,322.30 651.90,319.40 655.00,318.80 658.10,316.50 661.90,318.50 666.20,319.40 670.60,317.80 675.60,318.50 678.80,319.80 681.90,322.30 686.20,320.60 691.20,321.00 696.20,318.50 701.20,318.50 706.20,318.80 711.20,316.90 717.50,316.90 720.00,317.30 723.10,313.50 730.00,312.80 734.40,310.60 738.10,308.50 740.20,310.00" fill="none" stroke="#f6f6f6" stroke-width="1.85" stroke-linejoin="round" stroke-linecap="round"/>
<polyline points="741.20,313.50 743.80,314.80 748.80,313.10 752.50,311.30 754.40,312.30 762.50,312.30" fill="none" stroke="#f6f6f6" stroke-width="1.85" stroke-linejoin="round" stroke-linecap="round"/>
<polyline points="763.50,308.10 766.90,309.40 770.60,307.80 774.40,308.80 778.10,307.80 781.20,308.80 786.20,308.10 791.20,308.80 795.00,308.50" fill="none" stroke="#f6f6f6" stroke-width="1.85" stroke-linejoin="round" stroke-linecap="round"/>
<line x1="28.80" y1="373.30" x2="28.80" y2="375.90" stroke="#ff7a2c" stroke-width="0.8" />
<line x1="41.20" y1="371.50" x2="41.20" y2="374.10" stroke="#ff7a2c" stroke-width="0.8" />
<line x1="50.60" y1="373.30" x2="50.60" y2="375.90" stroke="#ff7a2c" stroke-width="0.8" />
<line x1="62.50" y1="359.20" x2="62.50" y2="361.80" stroke="#ff7a2c" stroke-width="0.8" />
<line x1="76.90" y1="361.50" x2="76.90" y2="364.10" stroke="#ff7a2c" stroke-width="0.8" />
<line x1="90.00" y1="354.60" x2="90.00" y2="357.20" stroke="#ff7a2c" stroke-width="0.8" />
<line x1="103.80" y1="349.00" x2="103.80" y2="351.60" stroke="#ff7a2c" stroke-width="0.8" />
<line x1="121.20" y1="350.80" x2="121.20" y2="353.40" stroke="#ff7a2c" stroke-width="0.8" />
<line x1="135.60" y1="348.00" x2="135.60" y2="350.60" stroke="#ff7a2c" stroke-width="0.8" />
<line x1="146.20" y1="351.50" x2="146.20" y2="354.10" stroke="#ff7a2c" stroke-width="0.8" />
<line x1="156.20" y1="348.00" x2="156.20" y2="350.60" stroke="#ff7a2c" stroke-width="0.8" />
<line x1="168.10" y1="358.30" x2="168.10" y2="360.90" stroke="#ff7a2c" stroke-width="0.8" />
<line x1="177.80" y1="351.50" x2="177.80" y2="354.10" stroke="#ff7a2c" stroke-width="0.8" />
<line x1="189.40" y1="347.70" x2="189.40" y2="350.30" stroke="#ff7a2c" stroke-width="0.8" />
<line x1="199.40" y1="354.20" x2="199.40" y2="356.80" stroke="#ff7a2c" stroke-width="0.8" />
<line x1="211.20" y1="346.50" x2="211.20" y2="349.10" stroke="#ff7a2c" stroke-width="0.8" />
<line x1="221.90" y1="350.20" x2="221.90" y2="352.80" stroke="#ff7a2c" stroke-width="0.8" />
<line x1="233.10" y1="352.70" x2="233.10" y2="355.30" stroke="#ff7a2c" stroke-width="0.8" />
<line x1="246.20" y1="361.50" x2="246.20" y2="364.10" stroke="#ff7a2c" stroke-width="0.8" />
<line x1="261.20" y1="365.80" x2="261.20" y2="368.40" stroke="#ff7a2c" stroke-width="0.8" />
<line x1="273.80" y1="371.70" x2="273.80" y2="374.30" stroke="#ff7a2c" stroke-width="0.8" />
<line x1="286.20" y1="380.00" x2="286.20" y2="382.60" stroke="#ff7a2c" stroke-width="0.8" />
<line x1="300.00" y1="373.30" x2="300.00" y2="375.90" stroke="#ff7a2c" stroke-width="0.8" />
<line x1="310.60" y1="370.50" x2="310.60" y2="373.10" stroke="#ff7a2c" stroke-width="0.8" />
<line x1="325.00" y1="372.70" x2="325.00" y2="375.30" stroke="#ff7a2c" stroke-width="0.8" />
<line x1="335.60" y1="378.00" x2="335.60" y2="380.60" stroke="#ff7a2c" stroke-width="0.8" />
<line x1="351.20" y1="388.30" x2="351.20" y2="390.90" stroke="#ff7a2c" stroke-width="0.8" />
<line x1="364.40" y1="393.30" x2="364.40" y2="395.90" stroke="#ff7a2c" stroke-width="0.8" />
<line x1="378.10" y1="390.80" x2="378.10" y2="393.40" stroke="#ff7a2c" stroke-width="0.8" />
<line x1="393.80" y1="398.30" x2="393.80" y2="400.90" stroke="#ff7a2c" stroke-width="0.8" />
<line x1="405.00" y1="394.00" x2="405.00" y2="396.60" stroke="#ff7a2c" stroke-width="0.8" />
<line x1="421.20" y1="387.50" x2="421.20" y2="390.10" stroke="#ff7a2c" stroke-width="0.8" />
<line x1="438.10" y1="380.20" x2="438.10" y2="382.80" stroke="#ff7a2c" stroke-width="0.8" />
<line x1="453.80" y1="379.00" x2="453.80" y2="381.60" stroke="#ff7a2c" stroke-width="0.8" />
<line x1="462.50" y1="361.70" x2="462.50" y2="364.30" stroke="#ff7a2c" stroke-width="0.8" />
<line x1="480.60" y1="357.70" x2="480.60" y2="360.30" stroke="#ff7a2c" stroke-width="0.8" />
<line x1="492.50" y1="348.00" x2="492.50" y2="350.60" stroke="#ff7a2c" stroke-width="0.8" />
<line x1="510.00" y1="348.30" x2="510.00" y2="350.90" stroke="#ff7a2c" stroke-width="0.8" />
<line x1="529.40" y1="345.00" x2="529.40" y2="347.60" stroke="#ff7a2c" stroke-width="0.8" />
<line x1="550.00" y1="345.80" x2="550.00" y2="348.40" stroke="#ff7a2c" stroke-width="0.8" />
<line x1="568.10" y1="343.30" x2="568.10" y2="345.90" stroke="#ff7a2c" stroke-width="0.8" />
<line x1="582.50" y1="348.30" x2="582.50" y2="350.90" stroke="#ff7a2c" stroke-width="0.8" />
<line x1="596.20" y1="346.50" x2="596.20" y2="349.10" stroke="#ff7a2c" stroke-width="0.8" />
<line x1="611.20" y1="341.50" x2="611.20" y2="344.10" stroke="#ff7a2c" stroke-width="0.8" />
<line x1="627.50" y1="337.50" x2="627.50" y2="340.10" stroke="#ff7a2c" stroke-width="0.8" />
<line x1="638.10" y1="320.50" x2="638.10" y2="323.10" stroke="#ff7a2c" stroke-width="0.8" />
<line x1="651.90" y1="319.60" x2="651.90" y2="322.20" stroke="#ff7a2c" stroke-width="0.8" />
<line x1="666.20" y1="319.60" x2="666.20" y2="322.20" stroke="#ff7a2c" stroke-width="0.8" />
<line x1="681.90" y1="322.50" x2="681.90" y2="325.10" stroke="#ff7a2c" stroke-width="0.8" />
<line x1="701.20" y1="318.70" x2="701.20" y2="321.30" stroke="#ff7a2c" stroke-width="0.8" />
<line x1="720.00" y1="317.50" x2="720.00" y2="320.10" stroke="#ff7a2c" stroke-width="0.8" />
<line x1="738.10" y1="308.70" x2="738.10" y2="311.30" stroke="#ff7a2c" stroke-width="0.8" />
<line x1="748.80" y1="313.30" x2="748.80" y2="315.90" stroke="#ff7a2c" stroke-width="0.8" />
<line x1="763.50" y1="308.30" x2="763.50" y2="310.90" stroke="#ff7a2c" stroke-width="0.8" />
<line x1="778.10" y1="308.00" x2="778.10" y2="310.60" stroke="#ff7a2c" stroke-width="0.8" />
<line x1="795.00" y1="308.70" x2="795.00" y2="311.30" stroke="#ff7a2c" stroke-width="0.8" />
<path d="M2.0 -1.4q-1.6 -1.6 -3.4 -0.2q-1.6 1.8 0 3.6q1.8 1.4 3.6 -0.2q0.8 -1.2 0.2 -2.4M0.4 -3.2l2.2 1.6l-2.2 1.4z" transform="translate(33.1 380.6) scale(0.85)" fill="none" stroke="#12b412" stroke-width="1.4" stroke-linejoin="round"/>
<path d="M2.0 -1.4q-1.6 -1.6 -3.4 -0.2q-1.6 1.8 0 3.6q1.8 1.4 3.6 -0.2q0.8 -1.2 0.2 -2.4M0.4 -3.2l2.2 1.6l-2.2 1.4z" transform="translate(152.5 357.5) scale(0.85)" fill="none" stroke="#12b412" stroke-width="1.4" stroke-linejoin="round"/>
<path d="M2.0 -1.4q-1.6 -1.6 -3.4 -0.2q-1.6 1.8 0 3.6q1.8 1.4 3.6 -0.2q0.8 -1.2 0.2 -2.4M0.4 -3.2l2.2 1.6l-2.2 1.4z" transform="translate(163.1 361.3) scale(0.85)" fill="none" stroke="#12b412" stroke-width="1.4" stroke-linejoin="round"/>
<path d="M2.0 -1.4q-1.6 -1.6 -3.4 -0.2q-1.6 1.8 0 3.6q1.8 1.4 3.6 -0.2q0.8 -1.2 0.2 -2.4M0.4 -3.2l2.2 1.6l-2.2 1.4z" transform="translate(168.8 363.8) scale(0.85)" fill="none" stroke="#12b412" stroke-width="1.4" stroke-linejoin="round"/>
<path d="M2.0 -1.4q-1.6 -1.6 -3.4 -0.2q-1.6 1.8 0 3.6q1.8 1.4 3.6 -0.2q0.8 -1.2 0.2 -2.4M0.4 -3.2l2.2 1.6l-2.2 1.4z" transform="translate(232.5 362.5) scale(0.85)" fill="none" stroke="#12b412" stroke-width="1.4" stroke-linejoin="round"/>
<path d="M2.0 -1.4q-1.6 -1.6 -3.4 -0.2q-1.6 1.8 0 3.6q1.8 1.4 3.6 -0.2q0.8 -1.2 0.2 -2.4M0.4 -3.2l2.2 1.6l-2.2 1.4z" transform="translate(241.9 363.8) scale(0.85)" fill="none" stroke="#12b412" stroke-width="1.4" stroke-linejoin="round"/>
<path d="M2.0 -1.4q-1.6 -1.6 -3.4 -0.2q-1.6 1.8 0 3.6q1.8 1.4 3.6 -0.2q0.8 -1.2 0.2 -2.4M0.4 -3.2l2.2 1.6l-2.2 1.4z" transform="translate(247.5 366.9) scale(0.85)" fill="none" stroke="#12b412" stroke-width="1.4" stroke-linejoin="round"/>
<path d="M2.0 -1.4q-1.6 -1.6 -3.4 -0.2q-1.6 1.8 0 3.6q1.8 1.4 3.6 -0.2q0.8 -1.2 0.2 -2.4M0.4 -3.2l2.2 1.6l-2.2 1.4z" transform="translate(289.4 383.1) scale(0.85)" fill="none" stroke="#12b412" stroke-width="1.4" stroke-linejoin="round"/>
<path d="M2.0 -1.4q-1.6 -1.6 -3.4 -0.2q-1.6 1.8 0 3.6q1.8 1.4 3.6 -0.2q0.8 -1.2 0.2 -2.4M0.4 -3.2l2.2 1.6l-2.2 1.4z" transform="translate(320.6 380.0) scale(0.85)" fill="none" stroke="#12b412" stroke-width="1.4" stroke-linejoin="round"/>
<path d="M2.0 -1.4q-1.6 -1.6 -3.4 -0.2q-1.6 1.8 0 3.6q1.8 1.4 3.6 -0.2q0.8 -1.2 0.2 -2.4M0.4 -3.2l2.2 1.6l-2.2 1.4z" transform="translate(333.8 383.8) scale(0.85)" fill="none" stroke="#12b412" stroke-width="1.4" stroke-linejoin="round"/>
<path d="M2.0 -1.4q-1.6 -1.6 -3.4 -0.2q-1.6 1.8 0 3.6q1.8 1.4 3.6 -0.2q0.8 -1.2 0.2 -2.4M0.4 -3.2l2.2 1.6l-2.2 1.4z" transform="translate(334.4 384.4) scale(0.85)" fill="none" stroke="#12b412" stroke-width="1.4" stroke-linejoin="round"/>
<path d="M2.0 -1.4q-1.6 -1.6 -3.4 -0.2q-1.6 1.8 0 3.6q1.8 1.4 3.6 -0.2q0.8 -1.2 0.2 -2.4M0.4 -3.2l2.2 1.6l-2.2 1.4z" transform="translate(345.6 390.0) scale(0.85)" fill="none" stroke="#12b412" stroke-width="1.4" stroke-linejoin="round"/>
<path d="M2.0 -1.4q-1.6 -1.6 -3.4 -0.2q-1.6 1.8 0 3.6q1.8 1.4 3.6 -0.2q0.8 -1.2 0.2 -2.4M0.4 -3.2l2.2 1.6l-2.2 1.4z" transform="translate(353.8 395.6) scale(0.85)" fill="none" stroke="#12b412" stroke-width="1.4" stroke-linejoin="round"/>
<path d="M2.0 -1.4q-1.6 -1.6 -3.4 -0.2q-1.6 1.8 0 3.6q1.8 1.4 3.6 -0.2q0.8 -1.2 0.2 -2.4M0.4 -3.2l2.2 1.6l-2.2 1.4z" transform="translate(376.2 400.0) scale(0.85)" fill="none" stroke="#12b412" stroke-width="1.4" stroke-linejoin="round"/>
<path d="M2.0 -1.4q-1.6 -1.6 -3.4 -0.2q-1.6 1.8 0 3.6q1.8 1.4 3.6 -0.2q0.8 -1.2 0.2 -2.4M0.4 -3.2l2.2 1.6l-2.2 1.4z" transform="translate(388.8 405.6) scale(0.85)" fill="none" stroke="#12b412" stroke-width="1.4" stroke-linejoin="round"/>
<path d="M2.0 -1.4q-1.6 -1.6 -3.4 -0.2q-1.6 1.8 0 3.6q1.8 1.4 3.6 -0.2q0.8 -1.2 0.2 -2.4M0.4 -3.2l2.2 1.6l-2.2 1.4z" transform="translate(556.9 352.5) scale(0.85)" fill="none" stroke="#12b412" stroke-width="1.4" stroke-linejoin="round"/>
<path d="M2.0 -1.4q-1.6 -1.6 -3.4 -0.2q-1.6 1.8 0 3.6q1.8 1.4 3.6 -0.2q0.8 -1.2 0.2 -2.4M0.4 -3.2l2.2 1.6l-2.2 1.4z" transform="translate(588.8 354.0) scale(0.85)" fill="none" stroke="#12b412" stroke-width="1.4" stroke-linejoin="round"/>
<path d="M2.0 -1.4q-1.6 -1.6 -3.4 -0.2q-1.6 1.8 0 3.6q1.8 1.4 3.6 -0.2q0.8 -1.2 0.2 -2.4M0.4 -3.2l2.2 1.6l-2.2 1.4z" transform="translate(685.6 325.3) scale(0.85)" fill="none" stroke="#12b412" stroke-width="1.4" stroke-linejoin="round"/>
<path d="M-2.9 1.8l1.1 1.1l2.6 -2.6l1.3 1.3l0.6 -4.3l-4.3 0.6l1.3 1.3z" transform="translate(38.8 379.8) scale(1.08)" fill="#86ec9c" stroke="none" stroke-width="0" stroke-linejoin="round"/>
<path d="M-2.9 1.8l1.1 1.1l2.6 -2.6l1.3 1.3l0.6 -4.3l-4.3 0.6l1.3 1.3z" transform="translate(76.9 367.1) scale(1.08)" fill="#86ec9c" stroke="none" stroke-width="0" stroke-linejoin="round"/>
<path d="M-2.9 1.8l1.1 1.1l2.6 -2.6l1.3 1.3l0.6 -4.3l-4.3 0.6l1.3 1.3z" transform="translate(113.8 353.4) scale(1.08)" fill="#86ec9c" stroke="none" stroke-width="0" stroke-linejoin="round"/>
<path d="M-2.9 1.8l1.1 1.1l2.6 -2.6l1.3 1.3l0.6 -4.3l-4.3 0.6l1.3 1.3z" transform="translate(179.4 356.3) scale(1.08)" fill="#86ec9c" stroke="none" stroke-width="0" stroke-linejoin="round"/>
<path d="M-2.9 1.8l1.1 1.1l2.6 -2.6l1.3 1.3l0.6 -4.3l-4.3 0.6l1.3 1.3z" transform="translate(271.9 380.3) scale(1.08)" fill="#86ec9c" stroke="none" stroke-width="0" stroke-linejoin="round"/>
<path d="M-2.9 1.8l1.1 1.1l2.6 -2.6l1.3 1.3l0.6 -4.3l-4.3 0.6l1.3 1.3z" transform="translate(312.5 375.6) scale(1.08)" fill="#86ec9c" stroke="none" stroke-width="0" stroke-linejoin="round"/>
<path d="M-2.9 1.8l1.1 1.1l2.6 -2.6l1.3 1.3l0.6 -4.3l-4.3 0.6l1.3 1.3z" transform="translate(325.6 377.5) scale(1.08)" fill="#86ec9c" stroke="none" stroke-width="0" stroke-linejoin="round"/>
<path d="M-2.9 1.8l1.1 1.1l2.6 -2.6l1.3 1.3l0.6 -4.3l-4.3 0.6l1.3 1.3z" transform="translate(359.0 396.0) scale(1.08)" fill="#86ec9c" stroke="none" stroke-width="0" stroke-linejoin="round"/>
<path d="M-2.9 1.8l1.1 1.1l2.6 -2.6l1.3 1.3l0.6 -4.3l-4.3 0.6l1.3 1.3z" transform="translate(364.4 400.0) scale(1.08)" fill="#86ec9c" stroke="none" stroke-width="0" stroke-linejoin="round"/>
<path d="M-2.9 1.8l1.1 1.1l2.6 -2.6l1.3 1.3l0.6 -4.3l-4.3 0.6l1.3 1.3z" transform="translate(403.8 396.9) scale(1.08)" fill="#86ec9c" stroke="none" stroke-width="0" stroke-linejoin="round"/>
<path d="M-2.9 1.8l1.1 1.1l2.6 -2.6l1.3 1.3l0.6 -4.3l-4.3 0.6l1.3 1.3z" transform="translate(474.4 365.0) scale(1.08)" fill="#86ec9c" stroke="none" stroke-width="0" stroke-linejoin="round"/>
<path d="M-2.9 1.8l1.1 1.1l2.6 -2.6l1.3 1.3l0.6 -4.3l-4.3 0.6l1.3 1.3z" transform="translate(482.5 357.8) scale(1.08)" fill="#86ec9c" stroke="none" stroke-width="0" stroke-linejoin="round"/>
<path d="M-2.9 1.8l1.1 1.1l2.6 -2.6l1.3 1.3l0.6 -4.3l-4.3 0.6l1.3 1.3z" transform="translate(490.9 354.0) scale(1.08)" fill="#86ec9c" stroke="none" stroke-width="0" stroke-linejoin="round"/>
<path d="M-2.9 1.8l1.1 1.1l2.6 -2.6l1.3 1.3l0.6 -4.3l-4.3 0.6l1.3 1.3z" transform="translate(520.6 355.6) scale(1.08)" fill="#86ec9c" stroke="none" stroke-width="0" stroke-linejoin="round"/>
<path d="M-2.9 1.8l1.1 1.1l2.6 -2.6l1.3 1.3l0.6 -4.3l-4.3 0.6l1.3 1.3z" transform="translate(561.9 351.4) scale(1.08)" fill="#86ec9c" stroke="none" stroke-width="0" stroke-linejoin="round"/>
<path d="M-2.9 1.8l1.1 1.1l2.6 -2.6l1.3 1.3l0.6 -4.3l-4.3 0.6l1.3 1.3z" transform="translate(597.5 351.5) scale(1.08)" fill="#86ec9c" stroke="none" stroke-width="0" stroke-linejoin="round"/>
<path d="M-2.9 1.8l1.1 1.1l2.6 -2.6l1.3 1.3l0.6 -4.3l-4.3 0.6l1.3 1.3z" transform="translate(652.5 324.4) scale(1.08)" fill="#86ec9c" stroke="none" stroke-width="0" stroke-linejoin="round"/>
<path d="M-2.9 1.8l1.1 1.1l2.6 -2.6l1.3 1.3l0.6 -4.3l-4.3 0.6l1.3 1.3z" transform="translate(696.9 324.8) scale(1.08)" fill="#86ec9c" stroke="none" stroke-width="0" stroke-linejoin="round"/>
<path d="M-0.9 3.4h1.8v-3.2h1.7L0 -3.4L-2.6 0.2h1.7z" transform="translate(21.9 378.1) scale(1.12)" fill="#3cd848" stroke="none" stroke-width="0" stroke-linejoin="round"/>
<path d="M-0.9 3.4h1.8v-3.2h1.7L0 -3.4L-2.6 0.2h1.7z" transform="translate(40.6 376.0) scale(1.12)" fill="#3cd848" stroke="none" stroke-width="0" stroke-linejoin="round"/>
<path d="M-0.9 3.4h1.8v-3.2h1.7L0 -3.4L-2.6 0.2h1.7z" transform="translate(51.9 376.3) scale(1.12)" fill="#3cd848" stroke="none" stroke-width="0" stroke-linejoin="round"/>
<path d="M-0.9 3.4h1.8v-3.2h1.7L0 -3.4L-2.6 0.2h1.7z" transform="translate(135.6 354.0) scale(1.12)" fill="#3cd848" stroke="none" stroke-width="0" stroke-linejoin="round"/>
<path d="M-0.9 3.4h1.8v-3.2h1.7L0 -3.4L-2.6 0.2h1.7z" transform="translate(214.4 354.4) scale(1.12)" fill="#3cd848" stroke="none" stroke-width="0" stroke-linejoin="round"/>
<path d="M-0.9 3.4h1.8v-3.2h1.7L0 -3.4L-2.6 0.2h1.7z" transform="translate(218.8 354.0) scale(1.12)" fill="#3cd848" stroke="none" stroke-width="0" stroke-linejoin="round"/>
<path d="M-0.9 3.4h1.8v-3.2h1.7L0 -3.4L-2.6 0.2h1.7z" transform="translate(307.5 378.8) scale(1.12)" fill="#3cd848" stroke="none" stroke-width="0" stroke-linejoin="round"/>
<path d="M-0.9 3.4h1.8v-3.2h1.7L0 -3.4L-2.6 0.2h1.7z" transform="translate(372.5 398.8) scale(1.12)" fill="#3cd848" stroke="none" stroke-width="0" stroke-linejoin="round"/>
<path d="M-0.9 3.4h1.8v-3.2h1.7L0 -3.4L-2.6 0.2h1.7z" transform="translate(422.2 393.1) scale(1.12)" fill="#3cd848" stroke="none" stroke-width="0" stroke-linejoin="round"/>
<path d="M-0.9 3.4h1.8v-3.2h1.7L0 -3.4L-2.6 0.2h1.7z" transform="translate(436.9 386.9) scale(1.12)" fill="#3cd848" stroke="none" stroke-width="0" stroke-linejoin="round"/>
<path d="M-0.9 3.4h1.8v-3.2h1.7L0 -3.4L-2.6 0.2h1.7z" transform="translate(535.6 350.6) scale(1.12)" fill="#3cd848" stroke="none" stroke-width="0" stroke-linejoin="round"/>
<path d="M-0.9 3.4h1.8v-3.2h1.7L0 -3.4L-2.6 0.2h1.7z" transform="translate(564.4 350.6) scale(1.12)" fill="#3cd848" stroke="none" stroke-width="0" stroke-linejoin="round"/>
<path d="M-0.9 3.4h1.8v-3.2h1.7L0 -3.4L-2.6 0.2h1.7z" transform="translate(607.5 344.4) scale(1.12)" fill="#3cd848" stroke="none" stroke-width="0" stroke-linejoin="round"/>
<path d="M-0.9 3.4h1.8v-3.2h1.7L0 -3.4L-2.6 0.2h1.7z" transform="translate(640.6 327.8) scale(1.12)" fill="#3cd848" stroke="none" stroke-width="0" stroke-linejoin="round"/>
<path d="M-0.9 3.4h1.8v-3.2h1.7L0 -3.4L-2.6 0.2h1.7z" transform="translate(704.4 324.4) scale(1.12)" fill="#3cd848" stroke="none" stroke-width="0" stroke-linejoin="round"/>
<path d="M-0.9 3.4h1.8v-3.2h1.7L0 -3.4L-2.6 0.2h1.7z" transform="translate(707.9 323.1) scale(1.12)" fill="#3cd848" stroke="none" stroke-width="0" stroke-linejoin="round"/>
<path d="M-0.9 3.4h1.8v-3.2h1.7L0 -3.4L-2.6 0.2h1.7z" transform="translate(757.5 317.8) scale(1.12)" fill="#3cd848" stroke="none" stroke-width="0" stroke-linejoin="round"/>
<path d="M-2.2 -0.4q-0.4 -2.8 2.2 -2.9q2.7 0 2.3 2.6q-0.3 1.4 -1.6 2.2M-1.0 0.2l2.6 0.6l-1.4 2.4z" transform="translate(27.5 364.4) scale(0.9)" fill="none" stroke="#d40a0a" stroke-width="1.3" stroke-linejoin="round"/>
<path d="M-2.2 -0.4q-0.4 -2.8 2.2 -2.9q2.7 0 2.3 2.6q-0.3 1.4 -1.6 2.2M-1.0 0.2l2.6 0.6l-1.4 2.4z" transform="translate(45.6 362.8) scale(0.9)" fill="none" stroke="#d40a0a" stroke-width="1.3" stroke-linejoin="round"/>
<path d="M-2.2 -0.4q-0.4 -2.8 2.2 -2.9q2.7 0 2.3 2.6q-0.3 1.4 -1.6 2.2M-1.0 0.2l2.6 0.6l-1.4 2.4z" transform="translate(86.9 347.5) scale(0.9)" fill="none" stroke="#d40a0a" stroke-width="1.3" stroke-linejoin="round"/>
<path d="M-2.2 -0.4q-0.4 -2.8 2.2 -2.9q2.7 0 2.3 2.6q-0.3 1.4 -1.6 2.2M-1.0 0.2l2.6 0.6l-1.4 2.4z" transform="translate(133.8 338.8) scale(0.9)" fill="none" stroke="#d40a0a" stroke-width="1.3" stroke-linejoin="round"/>
<path d="M-2.2 -0.4q-0.4 -2.8 2.2 -2.9q2.7 0 2.3 2.6q-0.3 1.4 -1.6 2.2M-1.0 0.2l2.6 0.6l-1.4 2.4z" transform="translate(140.0 338.8) scale(0.9)" fill="none" stroke="#d40a0a" stroke-width="1.3" stroke-linejoin="round"/>
<path d="M-2.2 -0.4q-0.4 -2.8 2.2 -2.9q2.7 0 2.3 2.6q-0.3 1.4 -1.6 2.2M-1.0 0.2l2.6 0.6l-1.4 2.4z" transform="translate(143.8 338.5) scale(0.9)" fill="none" stroke="#d40a0a" stroke-width="1.3" stroke-linejoin="round"/>
<path d="M-2.2 -0.4q-0.4 -2.8 2.2 -2.9q2.7 0 2.3 2.6q-0.3 1.4 -1.6 2.2M-1.0 0.2l2.6 0.6l-1.4 2.4z" transform="translate(183.8 339.4) scale(0.9)" fill="none" stroke="#d40a0a" stroke-width="1.3" stroke-linejoin="round"/>
<path d="M-2.2 -0.4q-0.4 -2.8 2.2 -2.9q2.7 0 2.3 2.6q-0.3 1.4 -1.6 2.2M-1.0 0.2l2.6 0.6l-1.4 2.4z" transform="translate(196.9 338.8) scale(0.9)" fill="none" stroke="#d40a0a" stroke-width="1.3" stroke-linejoin="round"/>
<path d="M-2.2 -0.4q-0.4 -2.8 2.2 -2.9q2.7 0 2.3 2.6q-0.3 1.4 -1.6 2.2M-1.0 0.2l2.6 0.6l-1.4 2.4z" transform="translate(208.8 336.3) scale(0.9)" fill="none" stroke="#d40a0a" stroke-width="1.3" stroke-linejoin="round"/>
<path d="M-2.2 -0.4q-0.4 -2.8 2.2 -2.9q2.7 0 2.3 2.6q-0.3 1.4 -1.6 2.2M-1.0 0.2l2.6 0.6l-1.4 2.4z" transform="translate(312.5 364.4) scale(0.9)" fill="none" stroke="#d40a0a" stroke-width="1.3" stroke-linejoin="round"/>
<path d="M-2.2 -0.4q-0.4 -2.8 2.2 -2.9q2.7 0 2.3 2.6q-0.3 1.4 -1.6 2.2M-1.0 0.2l2.6 0.6l-1.4 2.4z" transform="translate(414.4 380.0) scale(0.9)" fill="none" stroke="#d40a0a" stroke-width="1.3" stroke-linejoin="round"/>
<path d="M-2.2 -0.4q-0.4 -2.8 2.2 -2.9q2.7 0 2.3 2.6q-0.3 1.4 -1.6 2.2M-1.0 0.2l2.6 0.6l-1.4 2.4z" transform="translate(423.8 380.0) scale(0.9)" fill="none" stroke="#d40a0a" stroke-width="1.3" stroke-linejoin="round"/>
<path d="M-2.2 -0.4q-0.4 -2.8 2.2 -2.9q2.7 0 2.3 2.6q-0.3 1.4 -1.6 2.2M-1.0 0.2l2.6 0.6l-1.4 2.4z" transform="translate(442.5 370.0) scale(0.9)" fill="none" stroke="#d40a0a" stroke-width="1.3" stroke-linejoin="round"/>
<path d="M-2.2 -0.4q-0.4 -2.8 2.2 -2.9q2.7 0 2.3 2.6q-0.3 1.4 -1.6 2.2M-1.0 0.2l2.6 0.6l-1.4 2.4z" transform="translate(530.6 338.1) scale(0.9)" fill="none" stroke="#d40a0a" stroke-width="1.3" stroke-linejoin="round"/>
<path d="M-2.2 -0.4q-0.4 -2.8 2.2 -2.9q2.7 0 2.3 2.6q-0.3 1.4 -1.6 2.2M-1.0 0.2l2.6 0.6l-1.4 2.4z" transform="translate(540.6 338.1) scale(0.9)" fill="none" stroke="#d40a0a" stroke-width="1.3" stroke-linejoin="round"/>
<path d="M-2.2 -0.4q-0.4 -2.8 2.2 -2.9q2.7 0 2.3 2.6q-0.3 1.4 -1.6 2.2M-1.0 0.2l2.6 0.6l-1.4 2.4z" transform="translate(548.1 336.9) scale(0.9)" fill="none" stroke="#d40a0a" stroke-width="1.3" stroke-linejoin="round"/>
<path d="M-2.2 -0.4q-0.4 -2.8 2.2 -2.9q2.7 0 2.3 2.6q-0.3 1.4 -1.6 2.2M-1.0 0.2l2.6 0.6l-1.4 2.4z" transform="translate(605.6 332.8) scale(0.9)" fill="none" stroke="#d40a0a" stroke-width="1.3" stroke-linejoin="round"/>
<path d="M-2.2 -0.4q-0.4 -2.8 2.2 -2.9q2.7 0 2.3 2.6q-0.3 1.4 -1.6 2.2M-1.0 0.2l2.6 0.6l-1.4 2.4z" transform="translate(611.2 333.1) scale(0.9)" fill="none" stroke="#d40a0a" stroke-width="1.3" stroke-linejoin="round"/>
<path d="M-2.2 -0.4q-0.4 -2.8 2.2 -2.9q2.7 0 2.3 2.6q-0.3 1.4 -1.6 2.2M-1.0 0.2l2.6 0.6l-1.4 2.4z" transform="translate(619.4 330.3) scale(0.9)" fill="none" stroke="#d40a0a" stroke-width="1.3" stroke-linejoin="round"/>
<path d="M-2.2 -0.4q-0.4 -2.8 2.2 -2.9q2.7 0 2.3 2.6q-0.3 1.4 -1.6 2.2M-1.0 0.2l2.6 0.6l-1.4 2.4z" transform="translate(631.9 331.3) scale(0.9)" fill="none" stroke="#d40a0a" stroke-width="1.3" stroke-linejoin="round"/>
<path d="M-2.2 -0.4q-0.4 -2.8 2.2 -2.9q2.7 0 2.3 2.6q-0.3 1.4 -1.6 2.2M-1.0 0.2l2.6 0.6l-1.4 2.4z" transform="translate(653.1 313.1) scale(0.9)" fill="none" stroke="#d40a0a" stroke-width="1.3" stroke-linejoin="round"/>
<path d="M-2.2 -0.4q-0.4 -2.8 2.2 -2.9q2.7 0 2.3 2.6q-0.3 1.4 -1.6 2.2M-1.0 0.2l2.6 0.6l-1.4 2.4z" transform="translate(661.2 310.6) scale(0.9)" fill="none" stroke="#d40a0a" stroke-width="1.3" stroke-linejoin="round"/>
<path d="M-2.2 -0.4q-0.4 -2.8 2.2 -2.9q2.7 0 2.3 2.6q-0.3 1.4 -1.6 2.2M-1.0 0.2l2.6 0.6l-1.4 2.4z" transform="translate(673.1 311.9) scale(0.9)" fill="none" stroke="#d40a0a" stroke-width="1.3" stroke-linejoin="round"/>
<path d="M-2.2 -0.4q-0.4 -2.8 2.2 -2.9q2.7 0 2.3 2.6q-0.3 1.4 -1.6 2.2M-1.0 0.2l2.6 0.6l-1.4 2.4z" transform="translate(700.8 311.4) scale(0.9)" fill="none" stroke="#d40a0a" stroke-width="1.3" stroke-linejoin="round"/>
<path d="M-2.2 -0.4q-0.4 -2.8 2.2 -2.9q2.7 0 2.3 2.6q-0.3 1.4 -1.6 2.2M-1.0 0.2l2.6 0.6l-1.4 2.4z" transform="translate(715.6 310.0) scale(0.9)" fill="none" stroke="#d40a0a" stroke-width="1.3" stroke-linejoin="round"/>
<path d="M-2.2 -0.4q-0.4 -2.8 2.2 -2.9q2.7 0 2.3 2.6q-0.3 1.4 -1.6 2.2M-1.0 0.2l2.6 0.6l-1.4 2.4z" transform="translate(726.0 306.3) scale(0.9)" fill="none" stroke="#d40a0a" stroke-width="1.3" stroke-linejoin="round"/>
<path d="M-2.2 -0.4q-0.4 -2.8 2.2 -2.9q2.7 0 2.3 2.6q-0.3 1.4 -1.6 2.2M-1.0 0.2l2.6 0.6l-1.4 2.4z" transform="translate(730.0 306.5) scale(0.9)" fill="none" stroke="#d40a0a" stroke-width="1.3" stroke-linejoin="round"/>
<path d="M-2.2 -0.4q-0.4 -2.8 2.2 -2.9q2.7 0 2.3 2.6q-0.3 1.4 -1.6 2.2M-1.0 0.2l2.6 0.6l-1.4 2.4z" transform="translate(739.4 302.3) scale(0.9)" fill="none" stroke="#d40a0a" stroke-width="1.3" stroke-linejoin="round"/>
<path d="M-2.2 -0.4q-0.4 -2.8 2.2 -2.9q2.7 0 2.3 2.6q-0.3 1.4 -1.6 2.2M-1.0 0.2l2.6 0.6l-1.4 2.4z" transform="translate(766.0 301.9) scale(0.9)" fill="none" stroke="#d40a0a" stroke-width="1.3" stroke-linejoin="round"/>
<path d="M-2.2 -0.4q-0.4 -2.8 2.2 -2.9q2.7 0 2.3 2.6q-0.3 1.4 -1.6 2.2M-1.0 0.2l2.6 0.6l-1.4 2.4z" transform="translate(772.8 301.9) scale(0.9)" fill="none" stroke="#d40a0a" stroke-width="1.3" stroke-linejoin="round"/>
<path d="M-2.9 -1.8l1.1 -1.1l2.6 2.6l1.3 -1.3l0.6 4.3l-4.3 -0.6l1.3 -1.3z" transform="translate(67.2 352.8) scale(1.05)" fill="#ff1010" stroke="none" stroke-width="0" stroke-linejoin="round"/>
<path d="M-2.9 -1.8l1.1 -1.1l2.6 2.6l1.3 -1.3l0.6 4.3l-4.3 -0.6l1.3 -1.3z" transform="translate(102.5 340.3) scale(1.05)" fill="#ff1010" stroke="none" stroke-width="0" stroke-linejoin="round"/>
<path d="M-2.9 -1.8l1.1 -1.1l2.6 2.6l1.3 -1.3l0.6 4.3l-4.3 -0.6l1.3 -1.3z" transform="translate(149.4 346.9) scale(1.05)" fill="#ff1010" stroke="none" stroke-width="0" stroke-linejoin="round"/>
<path d="M-2.9 -1.8l1.1 -1.1l2.6 2.6l1.3 -1.3l0.6 4.3l-4.3 -0.6l1.3 -1.3z" transform="translate(161.2 344.8) scale(1.05)" fill="#ff1010" stroke="none" stroke-width="0" stroke-linejoin="round"/>
<path d="M-2.9 -1.8l1.1 -1.1l2.6 2.6l1.3 -1.3l0.6 4.3l-4.3 -0.6l1.3 -1.3z" transform="translate(216.9 343.1) scale(1.05)" fill="#ff1010" stroke="none" stroke-width="0" stroke-linejoin="round"/>
<path d="M-2.9 -1.8l1.1 -1.1l2.6 2.6l1.3 -1.3l0.6 4.3l-4.3 -0.6l1.3 -1.3z" transform="translate(280.6 366.5) scale(1.05)" fill="#ff1010" stroke="none" stroke-width="0" stroke-linejoin="round"/>
<path d="M-2.9 -1.8l1.1 -1.1l2.6 2.6l1.3 -1.3l0.6 4.3l-4.3 -0.6l1.3 -1.3z" transform="translate(330.0 371.4) scale(1.05)" fill="#ff1010" stroke="none" stroke-width="0" stroke-linejoin="round"/>
<path d="M-2.9 -1.8l1.1 -1.1l2.6 2.6l1.3 -1.3l0.6 4.3l-4.3 -0.6l1.3 -1.3z" transform="translate(360.6 385.6) scale(1.05)" fill="#ff1010" stroke="none" stroke-width="0" stroke-linejoin="round"/>
<path d="M-2.9 -1.8l1.1 -1.1l2.6 2.6l1.3 -1.3l0.6 4.3l-4.3 -0.6l1.3 -1.3z" transform="translate(372.5 386.5) scale(1.05)" fill="#ff1010" stroke="none" stroke-width="0" stroke-linejoin="round"/>
<path d="M-2.9 -1.8l1.1 -1.1l2.6 2.6l1.3 -1.3l0.6 4.3l-4.3 -0.6l1.3 -1.3z" transform="translate(467.8 356.5) scale(1.05)" fill="#ff1010" stroke="none" stroke-width="0" stroke-linejoin="round"/>
<path d="M-2.9 -1.8l1.1 -1.1l2.6 2.6l1.3 -1.3l0.6 4.3l-4.3 -0.6l1.3 -1.3z" transform="translate(475.6 354.0) scale(1.05)" fill="#ff1010" stroke="none" stroke-width="0" stroke-linejoin="round"/>
<path d="M-2.9 -1.8l1.1 -1.1l2.6 2.6l1.3 -1.3l0.6 4.3l-4.3 -0.6l1.3 -1.3z" transform="translate(487.5 345.6) scale(1.05)" fill="#ff1010" stroke="none" stroke-width="0" stroke-linejoin="round"/>
<path d="M-2.9 -1.8l1.1 -1.1l2.6 2.6l1.3 -1.3l0.6 4.3l-4.3 -0.6l1.3 -1.3z" transform="translate(492.8 343.1) scale(1.05)" fill="#ff1010" stroke="none" stroke-width="0" stroke-linejoin="round"/>
<path d="M-2.9 -1.8l1.1 -1.1l2.6 2.6l1.3 -1.3l0.6 4.3l-4.3 -0.6l1.3 -1.3z" transform="translate(555.6 342.5) scale(1.05)" fill="#ff1010" stroke="none" stroke-width="0" stroke-linejoin="round"/>
<path d="M-2.9 -1.8l1.1 -1.1l2.6 2.6l1.3 -1.3l0.6 4.3l-4.3 -0.6l1.3 -1.3z" transform="translate(582.5 341.3) scale(1.05)" fill="#ff1010" stroke="none" stroke-width="0" stroke-linejoin="round"/>
<path d="M-2.9 -1.8l1.1 -1.1l2.6 2.6l1.3 -1.3l0.6 4.3l-4.3 -0.6l1.3 -1.3z" transform="translate(641.0 314.8) scale(1.05)" fill="#ff1010" stroke="none" stroke-width="0" stroke-linejoin="round"/>
<path d="M-2.9 -1.8l1.1 -1.1l2.6 2.6l1.3 -1.3l0.6 4.3l-4.3 -0.6l1.3 -1.3z" transform="translate(683.8 316.5) scale(1.05)" fill="#ff1010" stroke="none" stroke-width="0" stroke-linejoin="round"/>
<path d="M-0.9 -3.4h1.8v3.2h1.7L0 3.4L-2.6 -0.2h1.7z" transform="translate(31.2 369.4) scale(1.1)" fill="#ff1010" stroke="none" stroke-width="0" stroke-linejoin="round"/>
<path d="M-0.9 -3.4h1.8v3.2h1.7L0 3.4L-2.6 -0.2h1.7z" transform="translate(114.1 343.1) scale(1.1)" fill="#ff1010" stroke="none" stroke-width="0" stroke-linejoin="round"/>
<path d="M-0.9 -3.4h1.8v3.2h1.7L0 3.4L-2.6 -0.2h1.7z" transform="translate(145.9 341.9) scale(1.1)" fill="#ff1010" stroke="none" stroke-width="0" stroke-linejoin="round"/>
<path d="M-0.9 -3.4h1.8v3.2h1.7L0 3.4L-2.6 -0.2h1.7z" transform="translate(157.5 341.3) scale(1.1)" fill="#ff1010" stroke="none" stroke-width="0" stroke-linejoin="round"/>
<path d="M-0.9 -3.4h1.8v3.2h1.7L0 3.4L-2.6 -0.2h1.7z" transform="translate(192.5 340.6) scale(1.1)" fill="#ff1010" stroke="none" stroke-width="0" stroke-linejoin="round"/>
<path d="M-0.9 -3.4h1.8v3.2h1.7L0 3.4L-2.6 -0.2h1.7z" transform="translate(213.1 341.3) scale(1.1)" fill="#ff1010" stroke="none" stroke-width="0" stroke-linejoin="round"/>
<path d="M-0.9 -3.4h1.8v3.2h1.7L0 3.4L-2.6 -0.2h1.7z" transform="translate(220.6 343.8) scale(1.1)" fill="#ff1010" stroke="none" stroke-width="0" stroke-linejoin="round"/>
<path d="M-0.9 -3.4h1.8v3.2h1.7L0 3.4L-2.6 -0.2h1.7z" transform="translate(223.1 346.9) scale(1.1)" fill="#ff1010" stroke="none" stroke-width="0" stroke-linejoin="round"/>
<path d="M-0.9 -3.4h1.8v3.2h1.7L0 3.4L-2.6 -0.2h1.7z" transform="translate(225.6 346.3) scale(1.1)" fill="#ff1010" stroke="none" stroke-width="0" stroke-linejoin="round"/>
<path d="M-0.9 -3.4h1.8v3.2h1.7L0 3.4L-2.6 -0.2h1.7z" transform="translate(315.6 367.5) scale(1.1)" fill="#ff1010" stroke="none" stroke-width="0" stroke-linejoin="round"/>
<path d="M-0.9 -3.4h1.8v3.2h1.7L0 3.4L-2.6 -0.2h1.7z" transform="translate(338.1 375.0) scale(1.1)" fill="#ff1010" stroke="none" stroke-width="0" stroke-linejoin="round"/>
<path d="M-0.9 -3.4h1.8v3.2h1.7L0 3.4L-2.6 -0.2h1.7z" transform="translate(524.4 342.5) scale(1.1)" fill="#ff1010" stroke="none" stroke-width="0" stroke-linejoin="round"/>
<path d="M-0.9 -3.4h1.8v3.2h1.7L0 3.4L-2.6 -0.2h1.7z" transform="translate(563.1 339.8) scale(1.1)" fill="#ff1010" stroke="none" stroke-width="0" stroke-linejoin="round"/>
<path d="M-0.9 -3.4h1.8v3.2h1.7L0 3.4L-2.6 -0.2h1.7z" transform="translate(591.0 342.5) scale(1.1)" fill="#ff1010" stroke="none" stroke-width="0" stroke-linejoin="round"/>
<path d="M-0.9 -3.4h1.8v3.2h1.7L0 3.4L-2.6 -0.2h1.7z" transform="translate(627.9 331.9) scale(1.1)" fill="#ff1010" stroke="none" stroke-width="0" stroke-linejoin="round"/>
<path d="M-0.9 -3.4h1.8v3.2h1.7L0 3.4L-2.6 -0.2h1.7z" transform="translate(687.9 314.4) scale(1.1)" fill="#ff1010" stroke="none" stroke-width="0" stroke-linejoin="round"/>
<path d="M-0.9 -3.4h1.8v3.2h1.7L0 3.4L-2.6 -0.2h1.7z" transform="translate(702.4 313.6) scale(1.1)" fill="#ff1010" stroke="none" stroke-width="0" stroke-linejoin="round"/>
<path d="M-0.9 -3.4h1.8v3.2h1.7L0 3.4L-2.6 -0.2h1.7z" transform="translate(752.7 306.3) scale(1.1)" fill="#ff1010" stroke="none" stroke-width="0" stroke-linejoin="round"/>
<path d="M-0.9 -3.4h1.8v3.2h1.7L0 3.4L-2.6 -0.2h1.7z" transform="translate(786.2 302.5) scale(1.1)" fill="#ff1010" stroke="none" stroke-width="0" stroke-linejoin="round"/>
<line x1="851.20" y1="297.70" x2="851.20" y2="411.20" stroke="#ececec" stroke-width="1.1" />
<line x1="851.20" y1="299.28" x2="855.20" y2="299.28" stroke="#ececec" stroke-width="0.8" />
<line x1="851.20" y1="301.31" x2="853.10" y2="301.31" stroke="#ececec" stroke-width="0.8" />
<line x1="851.20" y1="303.34" x2="853.10" y2="303.34" stroke="#ececec" stroke-width="0.8" />
<line x1="851.20" y1="305.38" x2="853.10" y2="305.38" stroke="#ececec" stroke-width="0.8" />
<line x1="851.20" y1="307.41" x2="853.10" y2="307.41" stroke="#ececec" stroke-width="0.8" />
<line x1="851.20" y1="309.44" x2="855.20" y2="309.44" stroke="#ececec" stroke-width="0.8" />
<line x1="851.20" y1="311.47" x2="853.10" y2="311.47" stroke="#ececec" stroke-width="0.8" />
<line x1="851.20" y1="313.50" x2="853.10" y2="313.50" stroke="#ececec" stroke-width="0.8" />
<line x1="851.20" y1="315.54" x2="853.10" y2="315.54" stroke="#ececec" stroke-width="0.8" />
<line x1="851.20" y1="317.57" x2="853.10" y2="317.57" stroke="#ececec" stroke-width="0.8" />
<line x1="851.20" y1="319.60" x2="855.20" y2="319.60" stroke="#ececec" stroke-width="0.8" />
<line x1="851.20" y1="321.63" x2="853.10" y2="321.63" stroke="#ececec" stroke-width="0.8" />
<line x1="851.20" y1="323.66" x2="853.10" y2="323.66" stroke="#ececec" stroke-width="0.8" />
<line x1="851.20" y1="325.70" x2="853.10" y2="325.70" stroke="#ececec" stroke-width="0.8" />
<line x1="851.20" y1="327.73" x2="853.10" y2="327.73" stroke="#ececec" stroke-width="0.8" />
<line x1="851.20" y1="329.76" x2="855.20" y2="329.76" stroke="#ececec" stroke-width="0.8" />
<line x1="851.20" y1="331.79" x2="853.10" y2="331.79" stroke="#ececec" stroke-width="0.8" />
<line x1="851.20" y1="333.82" x2="853.10" y2="333.82" stroke="#ececec" stroke-width="0.8" />
<line x1="851.20" y1="335.86" x2="853.10" y2="335.86" stroke="#ececec" stroke-width="0.8" />
<line x1="851.20" y1="337.89" x2="853.10" y2="337.89" stroke="#ececec" stroke-width="0.8" />
<line x1="851.20" y1="339.92" x2="855.20" y2="339.92" stroke="#ececec" stroke-width="0.8" />
<line x1="851.20" y1="341.95" x2="853.10" y2="341.95" stroke="#ececec" stroke-width="0.8" />
<line x1="851.20" y1="343.98" x2="853.10" y2="343.98" stroke="#ececec" stroke-width="0.8" />
<line x1="851.20" y1="346.02" x2="853.10" y2="346.02" stroke="#ececec" stroke-width="0.8" />
<line x1="851.20" y1="348.05" x2="853.10" y2="348.05" stroke="#ececec" stroke-width="0.8" />
<line x1="851.20" y1="350.08" x2="855.20" y2="350.08" stroke="#ececec" stroke-width="0.8" />
<line x1="851.20" y1="352.11" x2="853.10" y2="352.11" stroke="#ececec" stroke-width="0.8" />
<line x1="851.20" y1="354.14" x2="853.10" y2="354.14" stroke="#ececec" stroke-width="0.8" />
<line x1="851.20" y1="356.18" x2="853.10" y2="356.18" stroke="#ececec" stroke-width="0.8" />
<line x1="851.20" y1="358.21" x2="853.10" y2="358.21" stroke="#ececec" stroke-width="0.8" />
<line x1="851.20" y1="360.24" x2="855.20" y2="360.24" stroke="#ececec" stroke-width="0.8" />
<line x1="851.20" y1="362.27" x2="853.10" y2="362.27" stroke="#ececec" stroke-width="0.8" />
<line x1="851.20" y1="364.30" x2="853.10" y2="364.30" stroke="#ececec" stroke-width="0.8" />
<line x1="851.20" y1="366.34" x2="853.10" y2="366.34" stroke="#ececec" stroke-width="0.8" />
<line x1="851.20" y1="368.37" x2="853.10" y2="368.37" stroke="#ececec" stroke-width="0.8" />
<line x1="851.20" y1="370.40" x2="855.20" y2="370.40" stroke="#ececec" stroke-width="0.8" />
<line x1="851.20" y1="372.43" x2="853.10" y2="372.43" stroke="#ececec" stroke-width="0.8" />
<line x1="851.20" y1="374.46" x2="853.10" y2="374.46" stroke="#ececec" stroke-width="0.8" />
<line x1="851.20" y1="376.50" x2="853.10" y2="376.50" stroke="#ececec" stroke-width="0.8" />
<line x1="851.20" y1="378.53" x2="853.10" y2="378.53" stroke="#ececec" stroke-width="0.8" />
<line x1="851.20" y1="380.56" x2="855.20" y2="380.56" stroke="#ececec" stroke-width="0.8" />
<line x1="851.20" y1="382.59" x2="853.10" y2="382.59" stroke="#ececec" stroke-width="0.8" />
<line x1="851.20" y1="384.62" x2="853.10" y2="384.62" stroke="#ececec" stroke-width="0.8" />
<line x1="851.20" y1="386.66" x2="853.10" y2="386.66" stroke="#ececec" stroke-width="0.8" />
<line x1="851.20" y1="388.69" x2="853.10" y2="388.69" stroke="#ececec" stroke-width="0.8" />
<line x1="851.20" y1="390.72" x2="855.20" y2="390.72" stroke="#ececec" stroke-width="0.8" />
<line x1="851.20" y1="392.75" x2="853.10" y2="392.75" stroke="#ececec" stroke-width="0.8" />
<line x1="851.20" y1="394.78" x2="853.10" y2="394.78" stroke="#ececec" stroke-width="0.8" />
<line x1="851.20" y1="396.82" x2="853.10" y2="396.82" stroke="#ececec" stroke-width="0.8" />
<line x1="851.20" y1="398.85" x2="853.10" y2="398.85" stroke="#ececec" stroke-width="0.8" />
<line x1="851.20" y1="400.88" x2="855.20" y2="400.88" stroke="#ececec" stroke-width="0.8" />
<line x1="851.20" y1="402.91" x2="853.10" y2="402.91" stroke="#ececec" stroke-width="0.8" />
<line x1="851.20" y1="404.94" x2="853.10" y2="404.94" stroke="#ececec" stroke-width="0.8" />
<line x1="851.20" y1="406.98" x2="853.10" y2="406.98" stroke="#ececec" stroke-width="0.8" />
<line x1="851.20" y1="409.01" x2="853.10" y2="409.01" stroke="#ececec" stroke-width="0.8" />
<text x="877.00" y="322.20" font-size="7.4" fill="#e4e4e4" text-anchor="end" >450</text>
<text x="877.00" y="332.36" font-size="7.4" fill="#e4e4e4" text-anchor="end" >445</text>
<text x="877.00" y="342.52" font-size="7.4" fill="#e4e4e4" text-anchor="end" >440</text>
<text x="877.00" y="352.68" font-size="7.4" fill="#e4e4e4" text-anchor="end" >435</text>
<text x="877.00" y="362.84" font-size="7.4" fill="#e4e4e4" text-anchor="end" >430</text>
<text x="877.00" y="373.00" font-size="7.4" fill="#e4e4e4" text-anchor="end" >425</text>
<text x="877.00" y="383.16" font-size="7.4" fill="#e4e4e4" text-anchor="end" >420</text>
<text x="877.00" y="393.32" font-size="7.4" fill="#e4e4e4" text-anchor="end" >415</text>
<text x="877.00" y="403.48" font-size="7.4" fill="#e4e4e4" text-anchor="end" >410</text>
<rect x="852.60" y="305.00" width="28.00" height="8.20" fill="#000" stroke="#22c422" stroke-width="0.9"/>
<text x="853.60" y="311.70" font-size="6.9" fill="#2fe02f" text-anchor="start" textLength="26.00" lengthAdjust="spacingAndGlyphs" >455.0250</text>
<line x1="18.50" y1="412.50" x2="849.00" y2="412.50" stroke="#a4a4a4" stroke-width="0.8" />
<line x1="18.50" y1="411.70" x2="40.40" y2="411.70" stroke="#e03a2a" stroke-width="0.8" stroke-dasharray="1.0 3.5"/>
<line x1="40.40" y1="411.70" x2="223.40" y2="411.70" stroke="#2fc02f" stroke-width="0.8" stroke-dasharray="1.0 3.5"/>
<line x1="223.40" y1="411.70" x2="437.20" y2="411.70" stroke="#e03a2a" stroke-width="0.8" stroke-dasharray="1.0 3.5"/>
<line x1="437.20" y1="411.70" x2="795.30" y2="411.70" stroke="#2fc02f" stroke-width="0.8" stroke-dasharray="1.0 3.5"/>
<line x1="18.50" y1="421.80" x2="849.00" y2="421.80" stroke="#bdbdbd" stroke-width="0.7" />
<line x1="69.30" y1="412.40" x2="69.30" y2="421.80" stroke="#f0f0f0" stroke-width="0.8" />
<line x1="178.00" y1="412.40" x2="178.00" y2="421.80" stroke="#f0f0f0" stroke-width="0.8" />
<line x1="286.30" y1="412.40" x2="286.30" y2="421.80" stroke="#f0f0f0" stroke-width="0.8" />
<line x1="394.40" y1="412.40" x2="394.40" y2="421.80" stroke="#f0f0f0" stroke-width="0.8" />
<line x1="502.60" y1="412.40" x2="502.60" y2="421.80" stroke="#f0f0f0" stroke-width="0.8" />
<line x1="611.20" y1="412.40" x2="611.20" y2="421.80" stroke="#f0f0f0" stroke-width="0.8" />
<line x1="719.30" y1="412.40" x2="719.30" y2="421.80" stroke="#f0f0f0" stroke-width="0.8" />
<line x1="437.20" y1="412.40" x2="437.20" y2="431.20" stroke="#d8d8d8" stroke-width="0.8" />
<text x="27.10" y="419.70" font-size="6.9" fill="#dedede" text-anchor="start" >5</text>
<text x="48.80" y="419.70" font-size="6.9" fill="#dedede" text-anchor="start" >6</text>
<text x="70.50" y="419.70" font-size="6.9" fill="#dedede" text-anchor="start" >9</text>
<text x="92.10" y="419.70" font-size="6.9" fill="#dedede" text-anchor="start" >10</text>
<text x="113.80" y="419.70" font-size="6.9" fill="#dedede" text-anchor="start" >11</text>
<text x="135.50" y="419.70" font-size="6.9" fill="#dedede" text-anchor="start" >12</text>
<text x="157.20" y="419.70" font-size="6.9" fill="#dedede" text-anchor="start" >13</text>
<text x="179.20" y="419.70" font-size="6.9" fill="#dedede" text-anchor="start" >16</text>
<text x="200.90" y="419.70" font-size="6.9" fill="#dedede" text-anchor="start" >17</text>
<text x="222.60" y="419.70" font-size="6.9" fill="#dedede" text-anchor="start" >18</text>
<text x="244.20" y="419.70" font-size="6.9" fill="#dedede" text-anchor="start" >19</text>
<text x="265.90" y="419.70" font-size="6.9" fill="#dedede" text-anchor="start" >20</text>
<text x="287.50" y="419.70" font-size="6.9" fill="#dedede" text-anchor="start" >23</text>
<text x="309.20" y="419.70" font-size="6.9" fill="#dedede" text-anchor="start" >24</text>
<text x="330.80" y="419.70" font-size="6.9" fill="#dedede" text-anchor="start" >25</text>
<text x="352.50" y="419.70" font-size="6.9" fill="#dedede" text-anchor="start" >26</text>
<text x="374.20" y="419.70" font-size="6.9" fill="#dedede" text-anchor="start" >27</text>
<text x="395.60" y="419.70" font-size="6.9" fill="#dedede" text-anchor="start" >30</text>
<text x="417.40" y="419.70" font-size="6.9" fill="#dedede" text-anchor="start" >31</text>
<text x="439.10" y="419.70" font-size="6.9" fill="#dedede" text-anchor="start" >1</text>
<text x="460.70" y="419.70" font-size="6.9" fill="#dedede" text-anchor="start" >2</text>
<text x="482.40" y="419.70" font-size="6.9" fill="#dedede" text-anchor="start" >3</text>
<text x="503.80" y="419.70" font-size="6.9" fill="#dedede" text-anchor="start" >6</text>
<text x="525.40" y="419.70" font-size="6.9" fill="#dedede" text-anchor="start" >7</text>
<text x="547.10" y="419.70" font-size="6.9" fill="#dedede" text-anchor="start" >8</text>
<text x="568.70" y="419.70" font-size="6.9" fill="#dedede" text-anchor="start" >9</text>
<text x="590.40" y="419.70" font-size="6.9" fill="#dedede" text-anchor="start" >10</text>
<text x="612.40" y="419.70" font-size="6.9" fill="#dedede" text-anchor="start" >13</text>
<text x="634.10" y="419.70" font-size="6.9" fill="#dedede" text-anchor="start" >14</text>
<text x="655.80" y="419.70" font-size="6.9" fill="#dedede" text-anchor="start" >15</text>
<text x="677.50" y="419.70" font-size="6.9" fill="#dedede" text-anchor="start" >16</text>
<text x="699.20" y="419.70" font-size="6.9" fill="#dedede" text-anchor="start" >17</text>
<text x="720.50" y="419.70" font-size="6.9" fill="#dedede" text-anchor="start" >20</text>
<text x="742.20" y="419.70" font-size="6.9" fill="#dedede" text-anchor="start" >21</text>
<text x="763.80" y="419.70" font-size="6.9" fill="#dedede" text-anchor="start" >22</text>
<text x="785.50" y="419.70" font-size="6.9" fill="#dedede" text-anchor="start" >24</text>
<text x="832.60" y="419.70" font-size="6.9" fill="#dedede" text-anchor="start" >25</text>
<text x="439.00" y="428.80" font-size="7.0" fill="#e8e8e8" text-anchor="start" textLength="32.00" lengthAdjust="spacingAndGlyphs" >November</text>
<rect x="849.60" y="412.20" width="30.40" height="19.40" fill="#e6e6e6" />
<circle cx="864.3" cy="421.6" r="4.3" fill="none" stroke="#2fd02f" stroke-width="0.9"/>
<circle cx="862.7" cy="420.2" r="0.6" fill="#2fd02f"/><circle cx="865.9" cy="420.2" r="0.6" fill="#2fd02f"/>
<path d="M861.8 422.6 q2.5 2.4 5.0 0" fill="none" stroke="#2fd02f" stroke-width="0.7" />
<rect x="18.50" y="431.40" width="861.50" height="13.20" fill="#f0f0f0" />
<rect x="18.50" y="431.40" width="861.50" height="1.00" fill="#f7f7f7" />
<rect x="320.60" y="436.60" width="432.00" height="2.70" fill="#7c7c7c" rx="1.2"/>
<line x1="764.30" y1="432.80" x2="764.30" y2="442.40" stroke="#9a9a9a" stroke-width="0.7" />
<line x1="791.80" y1="432.80" x2="791.80" y2="442.40" stroke="#9a9a9a" stroke-width="0.7" />
<line x1="843.30" y1="432.80" x2="843.30" y2="442.40" stroke="#9a9a9a" stroke-width="0.7" />
<path d="M768.8 437.2 a3 3 0 0 1 5.4 -1.6 M774.8 438.2 a3 3 0 0 1 -5.4 1.6" fill="none" stroke="#555" stroke-width="1.0" />
<path d="M773.4 433.8 l1.6 2.4 l-2.8 0.4 z M770.2 441.6 l-1.6 -2.4 l2.8 -0.4 z" fill="#555" stroke="none" stroke-width="1" />
<line x1="783.80" y1="435.00" x2="783.80" y2="440.60" stroke="#8a8a8a" stroke-width="1.0" />
<path d="M799.3 434.8 v6.0 M797.9 436.2 l1.4 -1.7 l1.4 1.7 M797.9 439.4 l1.4 1.7 l1.4 -1.7" fill="none" stroke="#444" stroke-width="0.9" />
<path d="M811.3 433.4 v8.8 M806.9 437.8 h8.8 M810 434.8 l1.3 -1.6 l1.3 1.6 M810 440.8 l1.3 1.6 l1.3 -1.6 M808.3 436.5 l-1.6 1.3 l1.6 1.3 M814.3 436.5 l1.6 1.3 l-1.6 1.3" fill="none" stroke="#444" stroke-width="0.8" />
<circle cx="823.3" cy="437.8" r="3.2" fill="#f3f3f3" stroke="#7a7a7a" stroke-width="0.7"/>
<line x1="821.70" y1="437.80" x2="824.90" y2="437.80" stroke="#555" stroke-width="0.8" />
<circle cx="835.3" cy="437.8" r="3.2" fill="#f3f3f3" stroke="#7a7a7a" stroke-width="0.7"/>
<path d="M833.7 437.8 h3.2 M835.3 436.2 v3.2" fill="none" stroke="#555" stroke-width="0.8" />
<path d="M852.6 435.4 v4.8 l-2.8 -2.4 z" fill="#c2c2c2" stroke="none" stroke-width="1" />
<path d="M861.4 435.4 v4.8 l2.8 -2.4 z" fill="#c2c2c2" stroke="none" stroke-width="1" />
<rect x="870.60" y="434.40" width="6.40" height="6.60" fill="#dcdcdc" stroke="#666" stroke-width="0.7"/>
<rect x="873.00" y="437.20" width="3.40" height="3.20" fill="#8a8a8a" />
<rect x="0.00" y="444.60" width="880.00" height="18.80" fill="#ebebeb" />
<line x1="0.00" y1="444.80" x2="880.00" y2="444.80" stroke="#d2d2d2" stroke-width="0.5" />
<rect x="1.60" y="447.40" width="3.00" height="14.00" fill="url(#gGrip)" />
<rect x="7.00" y="449.00" width="73.20" height="11.40" fill="#ffffff" stroke="#a6a6a6" stroke-width="0.7"/>
<line x1="15.00" y1="455.00" x2="61.20" y2="455.00" stroke="#6a6a6a" stroke-width="0.8" />
<path d="M72.8 453.8 l2.2 2.2 l2.2 -2.2" fill="none" stroke="#666" stroke-width="0.7" />
<rect x="84.60" y="449.00" width="56.00" height="11.40" fill="#ffffff" stroke="#a6a6a6" stroke-width="0.7"/>
<line x1="91.00" y1="455.00" x2="124.40" y2="455.00" stroke="#6a6a6a" stroke-width="0.8" />
<path d="M133.6 453.8 l2.2 2.2 l2.2 -2.2" fill="none" stroke="#666" stroke-width="0.7" />
<rect x="148.80" y="447.40" width="3.00" height="14.00" fill="url(#gGrip)" />
<rect x="154.90" y="449.20" width="5.20" height="5.20" fill="#8b0000" stroke="#b5b5b5" stroke-width="0.3"/>
<rect x="154.90" y="455.80" width="5.20" height="5.20" fill="#2e7ea8" stroke="#b5b5b5" stroke-width="0.3"/>
<rect x="161.73" y="449.20" width="5.20" height="5.20" fill="#006400" stroke="#b5b5b5" stroke-width="0.3"/>
<rect x="161.73" y="455.80" width="5.20" height="5.20" fill="#8fd0e0" stroke="#b5b5b5" stroke-width="0.3"/>
<rect x="168.56" y="449.20" width="5.20" height="5.20" fill="#ff6a1a" stroke="#b5b5b5" stroke-width="0.3"/>
<rect x="168.56" y="455.80" width="5.20" height="5.20" fill="#9bb860" stroke="#b5b5b5" stroke-width="0.3"/>
<rect x="175.39" y="449.20" width="5.20" height="5.20" fill="#ffb060" stroke="#b5b5b5" stroke-width="0.3"/>
<rect x="175.39" y="455.80" width="5.20" height="5.20" fill="#b8a0d0" stroke="#b5b5b5" stroke-width="0.3"/>
<rect x="182.22" y="449.20" width="5.20" height="5.20" fill="#0000ff" stroke="#b5b5b5" stroke-width="0.3"/>
<rect x="182.22" y="455.80" width="5.20" height="5.20" fill="#d08080" stroke="#b5b5b5" stroke-width="0.3"/>
<rect x="189.05" y="449.20" width="5.20" height="5.20" fill="#32cd32" stroke="#b5b5b5" stroke-width="0.3"/>
<rect x="189.05" y="455.80" width="5.20" height="5.20" fill="#ffc020" stroke="#b5b5b5" stroke-width="0.3"/>
<rect x="195.88" y="449.20" width="5.20" height="5.20" fill="#ff0000" stroke="#b5b5b5" stroke-width="0.3"/>
<rect x="195.88" y="455.80" width="5.20" height="5.20" fill="#ffffff" stroke="#b5b5b5" stroke-width="0.3"/>
<rect x="202.71" y="449.20" width="5.20" height="5.20" fill="#000000" stroke="#b5b5b5" stroke-width="0.3"/>
<rect x="202.71" y="455.80" width="5.20" height="5.20" fill="#3a9ad0" stroke="#b5b5b5" stroke-width="0.3"/>
<path d="M210.2 454.2 h2.8 l-1.4 1.8 z" fill="#222" stroke="none" stroke-width="1" />
<line x1="218.60" y1="446.20" x2="218.60" y2="462.20" stroke="#b0b0b0" stroke-width="0.6" />
<rect x="222.60" y="447.40" width="3.00" height="14.00" fill="url(#gGrip)" />
<rect x="230.20" y="452.20" width="9.00" height="6.60" fill="#fdfdfd" stroke="#8fa0b4" stroke-width="0.6"/>
<path d="M231.40 456.80 l1.8 -1.6 l1.2 0.8" fill="none" stroke="#e03030" stroke-width="0.6" />
<text x="236.80" y="458.00" font-size="5.4" fill="#333" text-anchor="middle" >1</text>
<rect x="245.60" y="452.20" width="9.00" height="6.60" fill="#fdfdfd" stroke="#8fa0b4" stroke-width="0.6"/>
<path d="M246.80 456.80 l1.8 -1.6 l1.2 0.8" fill="none" stroke="#e03030" stroke-width="0.6" />
<text x="252.20" y="458.00" font-size="5.4" fill="#333" text-anchor="middle" >2</text>
<rect x="261.00" y="452.20" width="9.00" height="6.60" fill="#fdfdfd" stroke="#8fa0b4" stroke-width="0.6"/>
<path d="M262.20 456.80 l1.8 -1.6 l1.2 0.8" fill="none" stroke="#e03030" stroke-width="0.6" />
<text x="267.60" y="458.00" font-size="5.4" fill="#333" text-anchor="middle" >3</text>
<rect x="276.40" y="452.20" width="9.00" height="6.60" fill="#fdfdfd" stroke="#8fa0b4" stroke-width="0.6"/>
<path d="M277.60 456.80 l1.8 -1.6 l1.2 0.8" fill="none" stroke="#e03030" stroke-width="0.6" />
<text x="283.00" y="458.00" font-size="5.4" fill="#333" text-anchor="middle" >4</text>
<rect x="291.80" y="452.20" width="9.00" height="6.60" fill="#fdfdfd" stroke="#8fa0b4" stroke-width="0.6"/>
<path d="M293.00 456.80 l1.8 -1.6 l1.2 0.8" fill="none" stroke="#e03030" stroke-width="0.6" />
<text x="298.40" y="458.00" font-size="5.4" fill="#333" text-anchor="middle" >5</text>
<rect x="307.20" y="452.20" width="9.00" height="6.60" fill="#fdfdfd" stroke="#8fa0b4" stroke-width="0.6"/>
<path d="M308.40 456.80 l1.8 -1.6 l1.2 0.8" fill="none" stroke="#e03030" stroke-width="0.6" />
<text x="313.80" y="458.00" font-size="5.4" fill="#333" text-anchor="middle" >6</text>
<line x1="323.60" y1="445.60" x2="323.60" y2="462.80" stroke="#8a8a8a" stroke-width="0.7" />
<rect x="0.00" y="463.20" width="880.00" height="4.00" fill="url(#gSep)" />
<rect x="0.00" y="466.60" width="880.00" height="28.40" fill="#1d1b23" />
<circle cx="19.6" cy="481.6" r="4.4" fill="#f7a11a"/>
<path d="M12.0 478.8 q0.2 -2.4 2.6 -2.2 q1.2 -1.8 3.4 -0.6 q2.0 0.4 1.6 2.8 z" fill="#d9e6f5" stroke="none" stroke-width="1" />
<path d="M17.6 486.0 q0.2 -2.6 2.8 -2.2 q1.4 -1.6 3.2 -0.4 q1.8 0.6 1.2 2.6 z" fill="#c9dcf2" stroke="none" stroke-width="1" />
<circle cx="22.4" cy="475.4" r="3.5" fill="#e0342c"/>
<text x="22.40" y="477.40" font-size="5.4" fill="#fff" text-anchor="middle" font-weight="bold">1</text>
<text x="29.60" y="478.60" font-size="6.9" fill="#f4f4f4" text-anchor="start" textLength="13.20" lengthAdjust="spacingAndGlyphs" >16°C</text>
<text x="29.60" y="487.60" font-size="6.9" fill="#d6d6d6" text-anchor="start" textLength="32.40" lengthAdjust="spacingAndGlyphs" >Parc. Ensol</text>
<rect x="179.80" y="474.80" width="6.40" height="6.40" fill="url(#gWin)" rx="0.5"/>
<rect x="186.80" y="474.80" width="6.40" height="6.40" fill="url(#gWin)" rx="0.5"/>
<rect x="179.80" y="481.80" width="6.40" height="6.40" fill="url(#gWin)" rx="0.5"/>
<rect x="186.80" y="481.80" width="6.40" height="6.40" fill="url(#gWin)" rx="0.5"/>
<rect x="201.80" y="472.40" width="124.60" height="17.60" fill="#f4f4f6" rx="8.8"/>
<circle cx="211.6" cy="480.4" r="2.9" fill="none" stroke="#2a2a2a" stroke-width="0.9"/>
<line x1="213.70" y1="482.60" x2="216.00" y2="485.20" stroke="#2a2a2a" stroke-width="1.0" />
<text x="222.60" y="483.90" font-size="7.6" fill="#5a5a5a" text-anchor="start" textLength="29.60" lengthAdjust="spacingAndGlyphs" >Procurar</text>
<circle cx="317.4" cy="481.0" r="5.2" fill="#fdfdfd" stroke="#4aa0e8" stroke-width="0.8"/>
<text x="317.50" y="483.80" font-size="8.0" fill="#1878d8" text-anchor="middle" font-weight="bold">b</text>
<circle cx="340.2" cy="480.6" r="6.2" fill="#6a5fd0"/>
<path d="M335.2 485.0 l-0.6 2.6 l3.0 -1.4 z" fill="#6a5fd0" stroke="none" stroke-width="1" />
<rect x="336.60" y="478.40" width="4.60" height="4.20" fill="#ffffff" rx="0.8"/>
<path d="M341.4 480.4 l2.4 -1.4 v3.2 z" fill="#fff" stroke="none" stroke-width="1" />
<path d="M359.0 475.6 h5.0 l1.4 1.6 h7.4 v9.8 h-13.8 z" fill="#f2b62c" stroke="none" stroke-width="1" />
<rect x="359.00" y="478.60" width="13.80" height="8.60" fill="#ffd75e" rx="0.6"/>
<rect x="362.60" y="484.60" width="6.60" height="2.60" fill="#3a8ae0" />
<rect x="384.60" y="475.40" width="12.60" height="11.40" fill="#d8492c" rx="1.2"/>
<rect x="390.60" y="477.00" width="6.40" height="8.20" fill="#f6c8bc" />
<text x="388.60" y="484.20" font-size="7.4" fill="#fff" text-anchor="middle" font-weight="bold">P</text>
<path d="M415.8 474.6 l4.6 10.4 h-9.2 z" fill="#f58a18" stroke="none" stroke-width="1" />
<path d="M413.7 479.6 h4.2 l0.9 2.0 h-6.0 z" fill="#fff" stroke="none" stroke-width="1" />
<rect x="409.60" y="485.00" width="12.40" height="2.40" fill="#f58a18" rx="0.8"/>
<circle cx="440.6" cy="481.2" r="6.0" fill="#e33b2e"/>
<path d="M440.6 481.2 L435.40 478.20 A6.0 6.0 0 0 0 440.60 487.20 Z" fill="#2da94f" stroke="none" stroke-width="1" />
<path d="M440.6 481.2 L440.60 487.20 A6.0 6.0 0 0 0 445.80 478.20 Z" fill="#fdc10f" stroke="none" stroke-width="1" />
<circle cx="440.6" cy="481.2" r="2.76" fill="#fff"/>
<circle cx="440.6" cy="481.2" r="2.16" fill="#3a82f0"/>
<circle cx="446.6" cy="475.8" r="3.3" fill="#f58a18"/>
<text x="446.60" y="477.60" font-size="4.4" fill="#fff" text-anchor="middle" >N</text>
<rect x="439.30" y="490.60" width="2.60" height="1.00" fill="#8a8a8a" rx="0.5"/>
<rect x="461.20" y="475.60" width="7.00" height="11.00" fill="#3a56b8" rx="1"/>
<rect x="466.20" y="477.00" width="6.60" height="8.20" fill="#dfe6f8" />
<text x="464.60" y="484.00" font-size="6.8" fill="#fff" text-anchor="middle" font-weight="bold">V</text>
<rect x="485.00" y="474.40" width="13.60" height="13.40" fill="#0e8f88" />
<path d="M488.4 486.0 h6.8 l-0.8 -3.0 q2.6 -1.8 1.4 -4.4 l-1.8 1.6 l-2.2 -2.6 l-2.2 2.6 l-1.8 -1.6 q-1.2 2.6 1.4 4.4 z" fill="#f4f4f4" stroke="none" stroke-width="1" />
<rect x="512.20" y="474.60" width="9.20" height="12.80" fill="#5a6270" rx="0.8"/>
<rect x="513.40" y="475.80" width="6.80" height="3.20" fill="#cfe0f2" />
<rect x="513.40" y="480.20" width="1.80" height="1.60" fill="#d8dde6" />
<rect x="515.80" y="480.20" width="1.80" height="1.60" fill="#d8dde6" />
<rect x="518.20" y="480.20" width="1.80" height="1.60" fill="#3a8ae0" />
<rect x="513.40" y="482.50" width="1.80" height="1.60" fill="#d8dde6" />
<rect x="515.80" y="482.50" width="1.80" height="1.60" fill="#d8dde6" />
<rect x="518.20" y="482.50" width="1.80" height="1.60" fill="#3a8ae0" />
<rect x="513.40" y="484.80" width="1.80" height="1.60" fill="#d8dde6" />
<rect x="515.80" y="484.80" width="1.80" height="1.60" fill="#d8dde6" />
<rect x="518.20" y="484.80" width="1.80" height="1.60" fill="#3a8ae0" />
<rect x="515.50" y="490.60" width="2.60" height="1.00" fill="#8a8a8a" rx="0.5"/>
<circle cx="542.6" cy="481.2" r="6.0" fill="#e33b2e"/>
<path d="M542.6 481.2 L537.40 478.20 A6.0 6.0 0 0 0 542.60 487.20 Z" fill="#2da94f" stroke="none" stroke-width="1" />
<path d="M542.6 481.2 L542.60 487.20 A6.0 6.0 0 0 0 547.80 478.20 Z" fill="#fdc10f" stroke="none" stroke-width="1" />
<circle cx="542.6" cy="481.2" r="2.76" fill="#fff"/>
<circle cx="542.6" cy="481.2" r="2.16" fill="#3a82f0"/>
<circle cx="567.6" cy="481.2" r="6.1" fill="#1f8ad8"/>
<path d="M562.0 482.6 q0.4 -5.6 6.0 -5.8 q4.4 0.2 5.4 4.0 q-3.0 -2.0 -6.2 -0.6 q-2.6 1.8 -1.4 4.8 q-3.2 -0.4 -3.8 -2.4 z" fill="#46d08a" stroke="none" stroke-width="1" />
<path d="M565.6 484.6 q0.2 -2.8 3.0 -3.2 q2.4 0 4.6 1.4 q-2.8 4.2 -7.6 1.8 z" fill="#0f5fb0" stroke="none" stroke-width="1" />
<rect x="566.30" y="490.60" width="2.60" height="1.00" fill="#8a8a8a" rx="0.5"/>
<rect x="586.40" y="475.60" width="7.00" height="11.00" fill="#1f7a45" rx="1"/>
<rect x="591.60" y="476.80" width="6.80" height="8.60" fill="#e4f2e8" stroke="#1f7a45" stroke-width="0.5"/>
<text x="589.80" y="484.00" font-size="6.8" fill="#fff" text-anchor="middle" font-weight="bold">X</text>
<rect x="591.30" y="490.60" width="2.60" height="1.00" fill="#8a8a8a" rx="0.5"/>
<rect x="611.40" y="475.60" width="7.00" height="11.00" fill="#2a5db8" rx="1"/>
<rect x="616.60" y="476.80" width="6.80" height="8.60" fill="#e2eaf8" stroke="#2a5db8" stroke-width="0.5"/>
<text x="614.80" y="484.00" font-size="6.2" fill="#fff" text-anchor="middle" font-weight="bold">W</text>
<rect x="616.30" y="490.60" width="2.60" height="1.00" fill="#8a8a8a" rx="0.5"/>
<rect x="635.80" y="476.60" width="13.60" height="9.40" fill="#f01414" rx="2.4"/>
<path d="M641.2 479.0 v4.6 l3.8 -2.3 z" fill="#fff" stroke="none" stroke-width="1" />
<rect x="659.60" y="469.00" width="18.60" height="24.00" fill="#35333c" rx="1.6"/>
<rect x="662.60" y="474.60" width="12.60" height="12.60" fill="#1c1c1e" rx="1.2"/>
<path d="M664.6 485.6 v-3.6 h1.8 v3.6 z M667.4 485.6 v-6.0 h1.8 v6.0 z M670.2 485.6 v-9.0 h1.8 v9.0 z" fill="#f58a18" stroke="none" stroke-width="1" />
<rect x="664.60" y="490.40" width="8.60" height="1.20" fill="#4cc2ff" rx="0.6"/>
<rect x="687.40" y="474.40" width="12.80" height="13.00" fill="#2a1216" rx="1.4" stroke="#b0202c" stroke-width="0.7"/>
<text x="693.80" y="485.60" font-size="5.6" fill="#c8283a" text-anchor="middle" >Pro</text>
<path d="M690.4 481.0 l2.2 -3.4 l1.6 2.0" fill="none" stroke="#b0202c" stroke-width="0.5" />
<rect x="692.50" y="490.60" width="2.60" height="1.00" fill="#8a8a8a" rx="0.5"/>
<path d="M756.8 482.4 l2.8 -2.8 l2.8 2.8" fill="none" stroke="#f0f0f0" stroke-width="0.9" />
<path d="M773.6 479.6 q4.0 -3.6 8.0 0" fill="none" stroke="#f0f0f0" stroke-width="0.7" />
<path d="M775.0 481.2 q2.6 -2.4 5.2 0" fill="none" stroke="#f0f0f0" stroke-width="0.7" />
<circle cx="777.6" cy="483.2" r="0.8" fill="#f0f0f0"/>
<path d="M786.6 479.8 h1.6 l2.2 -2.0 v6.6 l-2.2 -2.0 h-1.6 z" fill="none" stroke="#f0f0f0" stroke-width="0.7" />
<path d="M792.0 479.4 q1.4 1.8 0 3.6 M793.6 478.2 q2.2 3.0 0 6.0" fill="none" stroke="#f0f0f0" stroke-width="0.6" />
<rect x="801.60" y="478.60" width="7.40" height="4.80" fill="none" stroke="#f0f0f0" stroke-width="0.7" rx="1"/>
<rect x="809.20" y="480.00" width="0.90" height="2.00" fill="#f0f0f0" />
<rect x="802.40" y="479.40" width="3.40" height="3.20" fill="#f0f0f0" />
<path d="M801.8 476.6 l1.2 1.6 l1.6 -0.2" fill="none" stroke="#f0f0f0" stroke-width="0.6" />
<text x="854.60" y="479.20" font-size="7.0" fill="#f4f4f4" text-anchor="end" textLength="16.60" lengthAdjust="spacingAndGlyphs" >17:42</text>
<text x="854.60" y="488.40" font-size="7.0" fill="#f4f4f4" text-anchor="end" textLength="35.40" lengthAdjust="spacingAndGlyphs" >24/11/2023</text>
<path d="M860.6 483.6 q1.0 -0.8 1.0 -3.4 q0.2 -2.6 2.4 -2.6 q2.2 0 2.4 2.6 q0 2.6 1.0 3.4 z" fill="#60cdff" stroke="none" stroke-width="1" />
<circle cx="864.0" cy="484.6" r="0.9" fill="#60cdff"/>
<rect x="843.60" y="466.20" width="12.00" height="0.80" fill="#bcbcbc" />
<rect x="857.60" y="466.20" width="12.00" height="0.80" fill="#bcbcbc" />
</svg>
</body></html>
